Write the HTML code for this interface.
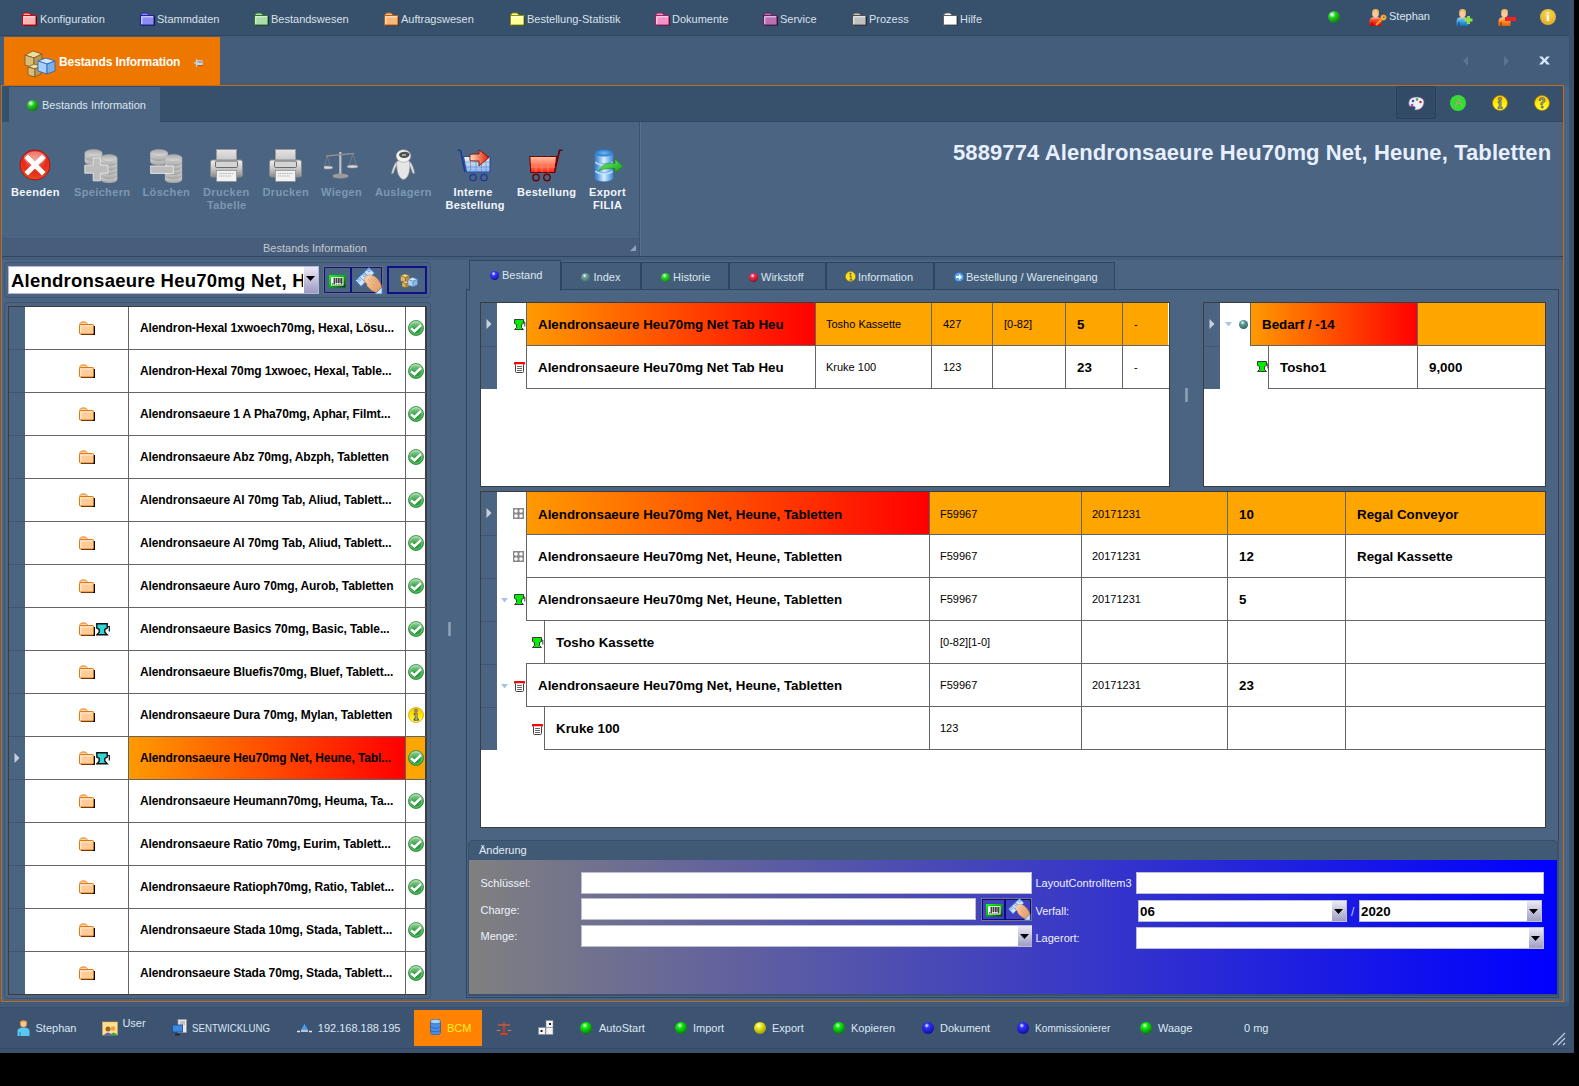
<!DOCTYPE html><html><head><meta charset="utf-8"><style>
html,body{margin:0;padding:0;background:#000;width:1579px;height:1086px;overflow:hidden}
div{position:absolute;box-sizing:border-box}
.t{white-space:pre;font-family:"Liberation Sans",sans-serif}
body{font-family:"Liberation Sans",sans-serif}
</style></head><body><div style="left:0px;top:0px;width:1574px;height:1053px;background:#4a6482"></div><div style="left:0px;top:0px;width:1569px;height:36px;background:#37506c"></div><div style="left:0px;top:35px;width:1569px;height:1px;background:#2e4661"></div><div style="left:1569px;top:0px;width:5px;height:1053px;background:#3a5270"></div><div style="left:0px;top:36px;width:1569px;height:50px;background:#445d7a"></div><div style="left:4px;top:37px;width:216px;height:49px;background:#ee7700"></div><div style="left:1px;top:85px;width:1563px;height:1px;background:#c86a10"></div><div style="left:1px;top:85px;width:1px;height:917px;background:#c86a10"></div><div style="left:1563px;top:85px;width:1px;height:917px;background:#c86a10"></div><div style="left:1px;top:1001px;width:1563px;height:1px;background:#c86a10"></div><div style="left:2px;top:86px;width:1561px;height:36px;background:#37516c"></div><div style="left:160px;top:121px;width:1403px;height:1px;background:#2f4761"></div><div style="left:9px;top:87px;width:151px;height:35px;background:#4a6482"></div><div style="left:2px;top:122px;width:1561px;height:134px;background:#4a6482"></div><div style="left:639px;top:122px;width:1px;height:134px;background:#3a5270"></div><div style="left:640px;top:122px;width:1px;height:134px;background:#587190"></div><div style="left:2px;top:256px;width:1561px;height:1px;background:#2f4762"></div><div style="left:2px;top:257px;width:1561px;height:3px;background:#445d7a"></div><div style="left:2px;top:262px;width:1561px;height:739px;background:#4a6482"></div><div style="left:0px;top:1002px;width:1569px;height:51px;background:#3a5270"></div><div style="left:0px;top:1002px;width:1569px;height:5px;background:#425a78"></div><div style="left:0px;top:1007px;width:1569px;height:1px;background:#36506b"></div><div style="left:0px;top:1008px;width:1569px;height:40px;background:#3c5472"></div><div style="left:0px;top:1048px;width:1569px;height:1px;background:#334a64"></div><svg style="position:absolute;left:22px;top:12px" width="16" height="14" viewBox="0 0 16 14"><path d="M2 4.5 h13 v9 h-13 z" fill="#000"/><path d="M1 3.5 v-1 l1.5 -1.5 h4.5 l1.5 1.5 v1 z" fill="#ffb0b0" stroke="#e00000" stroke-width="1"/><rect x="0.5" y="3.5" width="13.5" height="9.5" fill="#ffb0b0" stroke="#e00000" stroke-width="1"/><path d="M1.8 12 V4.8 H13" stroke="#fff" stroke-opacity="0.7" fill="none"/></svg><div class="t" style="left:40px;top:13.69px;font-size:11px;line-height:11px;font-weight:normal;color:#d8e0ea;">Konfiguration</div><svg style="position:absolute;left:140px;top:12px" width="16" height="14" viewBox="0 0 16 14"><path d="M2 4.5 h13 v9 h-13 z" fill="#000"/><path d="M1 3.5 v-1 l1.5 -1.5 h4.5 l1.5 1.5 v1 z" fill="#8c8cf0" stroke="#2020a0" stroke-width="1"/><rect x="0.5" y="3.5" width="13.5" height="9.5" fill="#8c8cf0" stroke="#2020a0" stroke-width="1"/><path d="M1.8 12 V4.8 H13" stroke="#fff" stroke-opacity="0.7" fill="none"/></svg><div class="t" style="left:157px;top:13.69px;font-size:11px;line-height:11px;font-weight:normal;color:#d8e0ea;">Stammdaten</div><svg style="position:absolute;left:254px;top:12px" width="16" height="14" viewBox="0 0 16 14"><path d="M2 4.5 h13 v9 h-13 z" fill="#000"/><path d="M1 3.5 v-1 l1.5 -1.5 h4.5 l1.5 1.5 v1 z" fill="#a8dca8" stroke="#307030" stroke-width="1"/><rect x="0.5" y="3.5" width="13.5" height="9.5" fill="#a8dca8" stroke="#307030" stroke-width="1"/><path d="M1.8 12 V4.8 H13" stroke="#fff" stroke-opacity="0.7" fill="none"/></svg><div class="t" style="left:271px;top:13.69px;font-size:11px;line-height:11px;font-weight:normal;color:#d8e0ea;">Bestandswesen</div><svg style="position:absolute;left:384px;top:12px" width="16" height="14" viewBox="0 0 16 14"><path d="M2 4.5 h13 v9 h-13 z" fill="#000"/><path d="M1 3.5 v-1 l1.5 -1.5 h4.5 l1.5 1.5 v1 z" fill="#f8b87a" stroke="#b06020" stroke-width="1"/><rect x="0.5" y="3.5" width="13.5" height="9.5" fill="#f8b87a" stroke="#b06020" stroke-width="1"/><path d="M1.8 12 V4.8 H13" stroke="#fff" stroke-opacity="0.7" fill="none"/></svg><div class="t" style="left:401px;top:13.69px;font-size:11px;line-height:11px;font-weight:normal;color:#d8e0ea;">Auftragswesen</div><svg style="position:absolute;left:510px;top:12px" width="16" height="14" viewBox="0 0 16 14"><path d="M2 4.5 h13 v9 h-13 z" fill="#000"/><path d="M1 3.5 v-1 l1.5 -1.5 h4.5 l1.5 1.5 v1 z" fill="#ffff9c" stroke="#909000" stroke-width="1"/><rect x="0.5" y="3.5" width="13.5" height="9.5" fill="#ffff9c" stroke="#909000" stroke-width="1"/><path d="M1.8 12 V4.8 H13" stroke="#fff" stroke-opacity="0.7" fill="none"/></svg><div class="t" style="left:527px;top:13.69px;font-size:11px;line-height:11px;font-weight:normal;color:#d8e0ea;">Bestellung-Statistik</div><svg style="position:absolute;left:655px;top:12px" width="16" height="14" viewBox="0 0 16 14"><path d="M2 4.5 h13 v9 h-13 z" fill="#000"/><path d="M1 3.5 v-1 l1.5 -1.5 h4.5 l1.5 1.5 v1 z" fill="#f590c8" stroke="#a02060" stroke-width="1"/><rect x="0.5" y="3.5" width="13.5" height="9.5" fill="#f590c8" stroke="#a02060" stroke-width="1"/><path d="M1.8 12 V4.8 H13" stroke="#fff" stroke-opacity="0.7" fill="none"/></svg><div class="t" style="left:672px;top:13.69px;font-size:11px;line-height:11px;font-weight:normal;color:#d8e0ea;">Dokumente</div><svg style="position:absolute;left:763px;top:12px" width="16" height="14" viewBox="0 0 16 14"><path d="M2 4.5 h13 v9 h-13 z" fill="#000"/><path d="M1 3.5 v-1 l1.5 -1.5 h4.5 l1.5 1.5 v1 z" fill="#b870b0" stroke="#602060" stroke-width="1"/><rect x="0.5" y="3.5" width="13.5" height="9.5" fill="#b870b0" stroke="#602060" stroke-width="1"/><path d="M1.8 12 V4.8 H13" stroke="#fff" stroke-opacity="0.7" fill="none"/></svg><div class="t" style="left:780px;top:13.69px;font-size:11px;line-height:11px;font-weight:normal;color:#d8e0ea;">Service</div><svg style="position:absolute;left:852px;top:12px" width="16" height="14" viewBox="0 0 16 14"><path d="M2 4.5 h13 v9 h-13 z" fill="#000"/><path d="M1 3.5 v-1 l1.5 -1.5 h4.5 l1.5 1.5 v1 z" fill="#c0c0c0" stroke="#505050" stroke-width="1"/><rect x="0.5" y="3.5" width="13.5" height="9.5" fill="#c0c0c0" stroke="#505050" stroke-width="1"/><path d="M1.8 12 V4.8 H13" stroke="#fff" stroke-opacity="0.7" fill="none"/></svg><div class="t" style="left:869px;top:13.69px;font-size:11px;line-height:11px;font-weight:normal;color:#d8e0ea;">Prozess</div><svg style="position:absolute;left:943px;top:12px" width="16" height="14" viewBox="0 0 16 14"><path d="M2 4.5 h13 v9 h-13 z" fill="#000"/><path d="M1 3.5 v-1 l1.5 -1.5 h4.5 l1.5 1.5 v1 z" fill="#ffffff" stroke="#606060" stroke-width="1"/><rect x="0.5" y="3.5" width="13.5" height="9.5" fill="#ffffff" stroke="#606060" stroke-width="1"/><path d="M1.8 12 V4.8 H13" stroke="#fff" stroke-opacity="0.7" fill="none"/></svg><div class="t" style="left:960px;top:13.69px;font-size:11px;line-height:11px;font-weight:normal;color:#d8e0ea;">Hilfe</div><div style="left:1328px;top:11px;width:12px;height:12px;border-radius:50%;background:radial-gradient(circle at 35% 30%, #ffffff 0, #22cc22 30%, #005500 100%)"></div><svg style="position:absolute;left:1369px;top:9px" width="14" height="17" viewBox="0 0 14 17"><defs><linearGradient id="pb1369" x1="0" y1="0" x2="0" y2="1"><stop offset="0" stop-color="#ffd0b0"/><stop offset="0.3" stop-color="#ff5030"/><stop offset="1" stop-color="#d00000"/></linearGradient></defs><circle cx="6.5" cy="5" r="3.3" fill="#ffc898"/><path d="M3 4 q0 -4 3.5 -4 q4 0 3.5 4 q-1 -2 -3.5 -2 q-2.5 0 -3.5 2z" fill="#e8c060"/><path d="M0.5 17 v-5 q0 -4 6 -4 q6 0 6 4 v5 z" fill="url(#pb1369)"/><path d="M3 17 v-4" stroke="#601000" stroke-width="0.8"/></svg><svg style="position:absolute;left:1375px;top:14px" width="12" height="12" viewBox="0 0 12 12"><path d="M1 11 L7 5" stroke="#f0a030" stroke-width="2.2"/><circle cx="8.5" cy="3.5" r="2.8" fill="#ffb040" stroke="#d08020" stroke-width="0.6"/><circle cx="8.8" cy="3.2" r="0.8" fill="#3a5270"/></svg><div class="t" style="left:1389px;top:11.39px;font-size:11px;line-height:11px;font-weight:normal;color:#dce6f0;">Stephan</div><svg style="position:absolute;left:1456px;top:9px" width="14" height="17" viewBox="0 0 14 17"><defs><linearGradient id="pb1456" x1="0" y1="0" x2="0" y2="1"><stop offset="0" stop-color="#ffd0b0"/><stop offset="0.3" stop-color="#50b8f0"/><stop offset="1" stop-color="#1070c0"/></linearGradient></defs><circle cx="6.5" cy="5" r="3.3" fill="#ffc898"/><path d="M3 4 q0 -4 3.5 -4 q4 0 3.5 4 q-1 -2 -3.5 -2 q-2.5 0 -3.5 2z" fill="#e8c060"/><path d="M0.5 17 v-5 q0 -4 6 -4 q6 0 6 4 v5 z" fill="url(#pb1456)"/><path d="M3 17 v-4" stroke="#601000" stroke-width="0.8"/></svg><svg style="position:absolute;left:1464px;top:15px" width="10" height="10" viewBox="0 0 10 10"><path d="M4.5 1 v8 M0.5 5 h8" stroke="#90e040" stroke-width="3"/></svg><svg style="position:absolute;left:1498px;top:9px" width="14" height="17" viewBox="0 0 14 17"><defs><linearGradient id="pb1498" x1="0" y1="0" x2="0" y2="1"><stop offset="0" stop-color="#ffd0b0"/><stop offset="0.3" stop-color="#ffa040"/><stop offset="1" stop-color="#e06000"/></linearGradient></defs><circle cx="6.5" cy="5" r="3.3" fill="#ffc898"/><path d="M3 4 q0 -4 3.5 -4 q4 0 3.5 4 q-1 -2 -3.5 -2 q-2.5 0 -3.5 2z" fill="#e8c060"/><path d="M0.5 17 v-5 q0 -4 6 -4 q6 0 6 4 v5 z" fill="url(#pb1498)"/><path d="M3 17 v-4" stroke="#601000" stroke-width="0.8"/></svg><svg style="position:absolute;left:1505px;top:17px" width="11" height="5" viewBox="0 0 11 5"><rect x="0" y="0" width="11" height="4" fill="#ee2222"/></svg><div style="left:1540px;top:9px;width:16px;height:16px;border-radius:50%;background:radial-gradient(circle at 50% 35%, #f8d860, #d8a010);"></div><div class="t" style="left:1540px;top:9px;width:16px;height:16px;line-height:16px;text-align:center;font-family:'Liberation Serif',serif;font-weight:bold;font-size:12px;color:#ffffff">i</div><svg style="position:absolute;left:24px;top:50px" width="34" height="28" viewBox="0 0 34 28"><g stroke="#7a5a20" stroke-width="0.8"><path d="M1 5 l8 -4 l9 3 l-8 4 z" fill="#f0dca0"/><path d="M1 5 l9 3 v10 l-9 -3 z" fill="#d8bc78"/><path d="M10 8 l8 -4 v10 l-8 4 z" fill="#b8985a"/><path d="M4 17 l6 -3 l7 2 l-6 3 z" fill="#f0dca0"/><path d="M4 17 l7 2 v8 l-7 -2 z" fill="#d8bc78"/><path d="M11 19 l6 -3 v8 l-6 3 z" fill="#b8985a"/></g><g stroke="#2a62b0" stroke-width="0.8"><path d="M14 11 l8 -3 l9 3 l-8 3 z" fill="#d0e8ff"/><path d="M14 11 l9 3 v10 l-9 -3 z" fill="#a8d0f8"/><path d="M23 14 l8 -3 v10 l-8 3 z" fill="#7ab0e8"/></g></svg><div class="t" style="left:59px;top:56.34px;font-size:12px;line-height:12px;font-weight:bold;color:#ffffff;letter-spacing:-0.1px">Bestands Information</div><svg style="position:absolute;left:194px;top:59px" width="10" height="9" viewBox="0 0 10 9"><path d="M0 3.8 h2.5 M2.6 0.3 v7.4" stroke="#c0dcf8" stroke-width="1.3"/><rect x="3" y="1.3" width="5.6" height="4.8" rx="0.6" fill="#c0dcf8"/><path d="M3.5 3 h4.5" stroke="#b05a10" stroke-width="0.9"/><path d="M3.2 6.6 h5.6" stroke="#9a5010" stroke-width="0.7"/></svg><svg style="position:absolute;left:1462px;top:56px" width="7" height="10" viewBox="0 0 7 10"><path d="M6 0 L1 5 L6 10 z" fill="#5a7492"/></svg><svg style="position:absolute;left:1503px;top:56px" width="7" height="10" viewBox="0 0 7 10"><path d="M1 0 L6 5 L1 10 z" fill="#5a7492"/></svg><svg style="position:absolute;left:1539px;top:56px" width="11" height="9" viewBox="0 0 11 9"><path d="M0 0.5 h3.4 l2.1 2.4 l2.1 -2.4 h3.4 l-3.7 3.8 l3.7 4.2 h-3.4 l-2.1 -2.4 l-2.1 2.4 h-3.4 l3.7 -4.2 z" fill="#d4e4fa"/></svg><div style="left:27px;top:100px;width:11px;height:11px;border-radius:50%;background:radial-gradient(circle at 35% 30%, #ffffff 0, #22cc22 30%, #005500 100%)"></div><div class="t" style="left:42px;top:99.69px;font-size:11px;line-height:11px;font-weight:normal;color:#dce6f0;">Bestands Information</div><div style="left:1396px;top:86px;width:40px;height:33px;background:#324a66;border:1px solid #2b405a;border-radius:2px"></div><svg style="position:absolute;left:1408px;top:96px" width="17" height="15" viewBox="0 0 17 15"><path d="M8 1 C2 1 0 5 1 9 C2 12 5 9 7 11 C8 13 5 14 8 14 C14 14 16 9 16 6 C16 3 13 1 8 1 z" fill="#f0f0f8" stroke="#606080" stroke-width="0.7"/><circle cx="5" cy="5" r="1.3" fill="#3050d0"/><circle cx="9" cy="3.5" r="1.3" fill="#40a040"/><circle cx="12.5" cy="6" r="1.3" fill="#c03030"/><circle cx="4" cy="9" r="1.3" fill="#b040c0"/></svg><div style="left:1450px;top:95px;width:16px;height:16px;border-radius:50%;background:#33dd33"></div><div class="t" style="left:1450px;top:95px;width:16px;line-height:16px;text-align:center;font-size:12px;color:#b0a070">A</div><svg style="position:absolute;left:1492px;top:95px" width="16" height="16" viewBox="0 0 16 16"><defs><linearGradient id="yc" x1="0" y1="0" x2="0" y2="1"><stop offset="0" stop-color="#ffc800"/><stop offset="0.5" stop-color="#ffee00"/><stop offset="1" stop-color="#ffff40"/></linearGradient></defs><circle cx="8" cy="8" r="7.5" fill="url(#yc)" stroke="#b07800" stroke-width="0.8"/><circle cx="8" cy="4" r="1.7" fill="#8a8a8a" stroke="#444" stroke-width="0.5"/><path d="M6 6.5 h3.2 v5.5 h1.3 v1.6 h-4.6 v-1.6 h1.2 v-4 h-1.1z" fill="#999" stroke="#444" stroke-width="0.5"/></svg><svg style="position:absolute;left:1534px;top:95px" width="16" height="16" viewBox="0 0 16 16"><circle cx="8" cy="8" r="7.5" fill="url(#yc)" stroke="#b07800" stroke-width="0.8"/><path d="M5 5.5 q0 -3 3 -3 q3.2 0 3.2 3 q0 1.8 -2 2.6 q-0.8 0.4 -0.8 1.6 h-1.8 q0 -2 1.2 -2.6 q1.4 -0.7 1.4 -1.6 q0 -1.3 -1.2 -1.3 q-1.2 0 -1.2 1.3z" fill="#999" stroke="#444" stroke-width="0.5"/><circle cx="8.2" cy="12" r="1.2" fill="#999" stroke="#444" stroke-width="0.5"/></svg><svg style="position:absolute;left:19px;top:149px" width="32" height="32" viewBox="0 0 32 32"><defs><radialGradient id="rg1" cx="50%" cy="35%" r="65%"><stop offset="0" stop-color="#f08070"/><stop offset="0.6" stop-color="#e82a1c"/><stop offset="1" stop-color="#e05020"/></radialGradient></defs><circle cx="16" cy="16" r="15" fill="url(#rg1)" stroke="#b01010" stroke-width="1"/><ellipse cx="16" cy="9" rx="11" ry="6.5" fill="#fff" fill-opacity="0.3"/><path d="M9 9 L23 23 M23 9 L9 23" stroke="#fff" stroke-width="5" stroke-linecap="square"/></svg><div class="t" style="left:11px;top:187.39px;font-size:11px;line-height:11px;font-weight:bold;color:#f2f6fc;letter-spacing:0.35px">Beenden</div><svg style="position:absolute;left:84px;top:149px" width="34" height="34" viewBox="0 0 34 34"><defs><linearGradient id="cs1" x1="0" x2="0" y1="0" y2="1"><stop offset="0" stop-color="#e0e0e0"/><stop offset="1" stop-color="#a4a4a4"/></linearGradient><linearGradient id="ct1" x1="0" x2="0" y1="0" y2="1"><stop offset="0" stop-color="#a8a8a8"/><stop offset="1" stop-color="#dadada"/></linearGradient></defs><path d="M0.8000000000000007 8.3 v4.3 a8.7 3.6 0 0 0 17.4 0 v-4.3" fill="url(#cs1)" stroke="#9a9a9a" stroke-width="0.5"/><path d="M0.8000000000000007 4.0 v4.3 a8.7 3.6 0 0 0 17.4 0 v-4.3" fill="url(#cs1)" stroke="#9a9a9a" stroke-width="0.5"/><ellipse cx="9.5" cy="4" rx="8.7" ry="3.6" fill="url(#ct1)" stroke="#a8a8a8" stroke-width="0.5"/><path d="M16.8 26.2 v4.3 a8.2 3.6 0 0 0 16.4 0 v-4.3" fill="url(#cs1)" stroke="#9a9a9a" stroke-width="0.5"/><path d="M16.8 21.9 v4.3 a8.2 3.6 0 0 0 16.4 0 v-4.3" fill="url(#cs1)" stroke="#9a9a9a" stroke-width="0.5"/><path d="M16.8 17.6 v4.3 a8.2 3.6 0 0 0 16.4 0 v-4.3" fill="url(#cs1)" stroke="#9a9a9a" stroke-width="0.5"/><path d="M16.8 13.3 v4.3 a8.2 3.6 0 0 0 16.4 0 v-4.3" fill="url(#cs1)" stroke="#9a9a9a" stroke-width="0.5"/><path d="M16.8 9.0 v4.3 a8.2 3.6 0 0 0 16.4 0 v-4.3" fill="url(#cs1)" stroke="#9a9a9a" stroke-width="0.5"/><ellipse cx="25" cy="9" rx="8.2" ry="3.6" fill="url(#ct1)" stroke="#a8a8a8" stroke-width="0.5"/><path d="M9.2 9 h7.2 v7.2 h7.6 v8 h-7.6 v7.6 h-7.2 v-7.6 h-8.4 v-8 h8.4 z" fill="#bdbdbd" stroke="#e8e8e8" stroke-width="0.9"/></svg><div class="t" style="left:74px;top:187.39px;font-size:11px;line-height:11px;font-weight:bold;color:#7f97b3;letter-spacing:0.35px">Speichern</div><svg style="position:absolute;left:150px;top:149px" width="34" height="34" viewBox="0 0 34 34"><defs><linearGradient id="cs2" x1="0" x2="0" y1="0" y2="1"><stop offset="0" stop-color="#e0e0e0"/><stop offset="1" stop-color="#a4a4a4"/></linearGradient><linearGradient id="ct2" x1="0" x2="0" y1="0" y2="1"><stop offset="0" stop-color="#a8a8a8"/><stop offset="1" stop-color="#dadada"/></linearGradient></defs><path d="M0.1999999999999993 8.3 v4.3 a8.8 3.6 0 0 0 17.6 0 v-4.3" fill="url(#cs2)" stroke="#9a9a9a" stroke-width="0.5"/><path d="M0.1999999999999993 4.0 v4.3 a8.8 3.6 0 0 0 17.6 0 v-4.3" fill="url(#cs2)" stroke="#9a9a9a" stroke-width="0.5"/><ellipse cx="9" cy="4" rx="8.8" ry="3.6" fill="url(#ct2)" stroke="#a8a8a8" stroke-width="0.5"/><path d="M15.0 26.2 v4.3 a8.5 3.6 0 0 0 17.0 0 v-4.3" fill="url(#cs2)" stroke="#9a9a9a" stroke-width="0.5"/><path d="M15.0 21.9 v4.3 a8.5 3.6 0 0 0 17.0 0 v-4.3" fill="url(#cs2)" stroke="#9a9a9a" stroke-width="0.5"/><path d="M15.0 17.6 v4.3 a8.5 3.6 0 0 0 17.0 0 v-4.3" fill="url(#cs2)" stroke="#9a9a9a" stroke-width="0.5"/><path d="M15.0 13.3 v4.3 a8.5 3.6 0 0 0 17.0 0 v-4.3" fill="url(#cs2)" stroke="#9a9a9a" stroke-width="0.5"/><path d="M15.0 9.0 v4.3 a8.5 3.6 0 0 0 17.0 0 v-4.3" fill="url(#cs2)" stroke="#9a9a9a" stroke-width="0.5"/><ellipse cx="23.5" cy="9" rx="8.5" ry="3.6" fill="url(#ct2)" stroke="#a8a8a8" stroke-width="0.5"/><rect x="0.7" y="17" width="22.6" height="7.4" fill="#bdbdbd" stroke="#e8e8e8" stroke-width="0.9"/></svg><div class="t" style="left:142.5px;top:187.39px;font-size:11px;line-height:11px;font-weight:bold;color:#7f97b3;letter-spacing:0.35px">Löschen</div><svg style="position:absolute;left:210px;top:149px" width="33" height="33" viewBox="0 0 33 33"><defs><linearGradient id="pg210" x1="0" y1="0" x2="0" y2="1"><stop offset="0" stop-color="#f0f0f0"/><stop offset="0.5" stop-color="#c8c8c8"/><stop offset="1" stop-color="#8a8a8a"/></linearGradient><linearGradient id="pt210" x1="0" y1="0" x2="0" y2="1"><stop offset="0" stop-color="#e4e4e4"/><stop offset="1" stop-color="#c4c4c4"/></linearGradient></defs><rect x="6.5" y="0.5" width="20" height="12" fill="url(#pt210)" stroke="#9a9a9a"/><rect x="0.5" y="11" width="32" height="17" rx="2" fill="url(#pg210)" stroke="#8a8a8a"/><rect x="5.5" y="12" width="22" height="6.5" rx="1.2" fill="#d4d4d4" stroke="#6a6a6a" stroke-width="1"/><rect x="6.5" y="21.5" width="20" height="11" fill="#f2f2f2" stroke="#8a8a8a" stroke-width="0.7"/><path d="M9 24.5 h15 M9 27 h12" stroke="#8a8a8a" stroke-width="0.6" stroke-dasharray="1.2 0.6"/></svg><div class="t" style="left:203px;top:187.39px;font-size:11px;line-height:11px;font-weight:bold;color:#7f97b3;letter-spacing:0.35px">Drucken</div><div class="t" style="left:207px;top:199.89px;font-size:11px;line-height:11px;font-weight:bold;color:#7f97b3;letter-spacing:0.35px">Tabelle</div><svg style="position:absolute;left:269px;top:149px" width="33" height="33" viewBox="0 0 33 33"><defs><linearGradient id="pg269" x1="0" y1="0" x2="0" y2="1"><stop offset="0" stop-color="#f0f0f0"/><stop offset="0.5" stop-color="#c8c8c8"/><stop offset="1" stop-color="#8a8a8a"/></linearGradient><linearGradient id="pt269" x1="0" y1="0" x2="0" y2="1"><stop offset="0" stop-color="#e4e4e4"/><stop offset="1" stop-color="#c4c4c4"/></linearGradient></defs><rect x="6.5" y="0.5" width="20" height="12" fill="url(#pt269)" stroke="#9a9a9a"/><rect x="0.5" y="11" width="32" height="17" rx="2" fill="url(#pg269)" stroke="#8a8a8a"/><rect x="5.5" y="12" width="22" height="6.5" rx="1.2" fill="#d4d4d4" stroke="#6a6a6a" stroke-width="1"/><rect x="6.5" y="21.5" width="20" height="11" fill="#f2f2f2" stroke="#8a8a8a" stroke-width="0.7"/><path d="M9 24.5 h15 M9 27 h12" stroke="#8a8a8a" stroke-width="0.6" stroke-dasharray="1.2 0.6"/></svg><div class="t" style="left:262.5px;top:187.39px;font-size:11px;line-height:11px;font-weight:bold;color:#7f97b3;letter-spacing:0.35px">Drucken</div><svg style="position:absolute;left:324px;top:149px" width="34" height="30" viewBox="0 0 34 30"><path d="M16.3 3 V26" stroke="#c0c0c0" stroke-width="2.2"/><path d="M2 7 L30 4.5" stroke="#8e8e8e" stroke-width="1.6"/><ellipse cx="16.5" cy="27" rx="8" ry="2.4" fill="#9a9a9a"/><path d="M3 7 L0.5 18 M3 7 L6.5 18 M29 4.5 L25 17 M29 4.5 L32.5 17" stroke="#8a8a8a" stroke-width="0.6"/><ellipse cx="3.5" cy="18.5" rx="5.5" ry="1.6" fill="#d8d8d8" stroke="#8a8a8a" stroke-width="0.6"/><ellipse cx="28.5" cy="17.5" rx="5.5" ry="1.6" fill="#d8d8d8" stroke="#8a8a8a" stroke-width="0.6"/></svg><div class="t" style="left:321px;top:187.39px;font-size:11px;line-height:11px;font-weight:bold;color:#7f97b3;letter-spacing:0.35px">Wiegen</div><svg style="position:absolute;left:391px;top:149px" width="24" height="31" viewBox="0 0 24 31"><path d="M5 13 C2.5 17 1 21 0.5 25 L2.5 24 C3.5 20 5 17 6.5 15z" fill="#dcdcdc" stroke="#9a9a9a" stroke-width="0.5"/><path d="M19.5 13 C22 17 23.5 21 23.5 25 L21.5 24 C20.5 20 19 17 17.5 15z" fill="#dcdcdc" stroke="#9a9a9a" stroke-width="0.5"/><path d="M6 12 C5 20 7 29.5 12.5 30.5 C18 29.5 19.5 20 18.5 12 z" fill="#e6e6e6" stroke="#a0a0a0" stroke-width="0.6"/><ellipse cx="12.5" cy="7" rx="7.3" ry="6.3" fill="#f2f2f2" stroke="#a0a0a0" stroke-width="0.6"/><path d="M8 5.5 C8.5 2.5 16 1.5 18.5 4.5 C19 7.5 16 9 13 9 C10 9 8 7.5 8 5.5z" fill="#505050"/><path d="M11 5 h4 v2 h-4z" fill="#a0a0a0"/></svg><div class="t" style="left:375px;top:187.39px;font-size:11px;line-height:11px;font-weight:bold;color:#7f97b3;letter-spacing:0.35px">Auslagern</div><svg style="position:absolute;left:457px;top:149px" width="34" height="33" viewBox="0 0 34 33"><defs><linearGradient id="cb" x1="0" y1="0" x2="0" y2="1"><stop offset="0" stop-color="#f0f8e8"/><stop offset="1" stop-color="#8ab4f0"/></linearGradient><linearGradient id="ar" x1="0" y1="0" x2="1" y2="0"><stop offset="0" stop-color="#ffe0c0"/><stop offset="1" stop-color="#e81800"/></linearGradient></defs><path d="M0.5 1.2 h3 L8 23" stroke="#1a3a98" stroke-width="1.5" fill="none"/><path d="M6.5 7.5 H33 V23 H9.5 Z" fill="url(#cb)" stroke="#2a4aa8" stroke-width="1.1"/><path d="M13.5 7.5 V23 M19 7.5 V23 M24.5 7.5 V23 M29 7.5 V23 M7.5 13 H33 M8.5 18 H33" stroke="#5a80d0" stroke-width="0.6"/><circle cx="16" cy="28.5" r="3.2" fill="none" stroke="#1a3a98" stroke-width="1.3"/><circle cx="27" cy="28.5" r="3.2" fill="none" stroke="#1a3a98" stroke-width="1.3"/><path d="M13 5.5 C15 5 18 5 22 5 V0.8 L32 8.5 L22 16.8 V12 C18 12 15 12 13 11.5 Z" fill="url(#ar)" stroke="#7a1000" stroke-width="0.9"/></svg><div class="t" style="left:453.5px;top:187.39px;font-size:11px;line-height:11px;font-weight:bold;color:#f2f6fc;letter-spacing:0.35px">Interne</div><div class="t" style="left:445.5px;top:199.89px;font-size:11px;line-height:11px;font-weight:bold;color:#f2f6fc;letter-spacing:0.3px">Bestellung</div><svg style="position:absolute;left:529px;top:149px" width="34" height="33" viewBox="0 0 34 33"><defs><linearGradient id="cr" x1="0" y1="0" x2="0" y2="1"><stop offset="0" stop-color="#ffc8a8"/><stop offset="1" stop-color="#ff2810"/></linearGradient></defs><path d="M33.5 1.2 h-3 L25.5 23.5" stroke="#6a0000" stroke-width="1.6" fill="none"/><path d="M0.8 7.5 H27.6 L25.5 23.5 H1.8 Z" fill="url(#cr)" stroke="#700000" stroke-width="1.1"/><path d="M7 7.5 V23.5 M13 7.5 V23.5 M19 7.5 V23.5 M1.2 12.8 H27 M1.5 18 H26.3" stroke="#ff9a80" stroke-width="0.6"/><circle cx="7" cy="28.5" r="3.2" fill="none" stroke="#6a0000" stroke-width="1.4"/><circle cx="18" cy="28.5" r="3.2" fill="none" stroke="#6a0000" stroke-width="1.4"/></svg><div class="t" style="left:517px;top:187.39px;font-size:11px;line-height:11px;font-weight:bold;color:#f2f6fc;letter-spacing:0.3px">Bestellung</div><svg style="position:absolute;left:594px;top:149px" width="30" height="33" viewBox="0 0 30 33"><defs><linearGradient id="db" x1="0" x2="1"><stop offset="0" stop-color="#2a7ad0"/><stop offset="0.5" stop-color="#d8f0ff"/><stop offset="1" stop-color="#3a88d8"/></linearGradient><radialGradient id="dt" cx="50%" cy="50%" r="60%"><stop offset="0" stop-color="#6ab8f8"/><stop offset="1" stop-color="#1a68c0"/></radialGradient><linearGradient id="ga" x1="0" y1="0" x2="1" y2="1"><stop offset="0" stop-color="#80f080"/><stop offset="1" stop-color="#10a010"/></linearGradient></defs><path d="M1 22 v7 a9 3.6 0 0 0 18 0 v-7" fill="url(#db)" stroke="#4a8ad0" stroke-width="0.5"/><ellipse cx="10" cy="22" rx="9" ry="3.6" fill="#bfe0ff"/><path d="M1 13 v7 a9 3.6 0 0 0 18 0 v-7" fill="url(#db)" stroke="#4a8ad0" stroke-width="0.5"/><ellipse cx="10" cy="13" rx="9" ry="3.6" fill="#bfe0ff"/><path d="M1 4 v7 a9 3.6 0 0 0 18 0 v-7" fill="url(#db)" stroke="#4a8ad0" stroke-width="0.5"/><ellipse cx="10" cy="4" rx="9" ry="3.6" fill="url(#dt)"/><path d="M5 22 C8 15 14 13.5 21 14.5 V10 L29 17.5 L21 23.5 V19.5 C15 19 9.5 19.5 5 22 Z" fill="url(#ga)" stroke="#0a900a" stroke-width="0.6"/></svg><div class="t" style="left:589px;top:187.39px;font-size:11px;line-height:11px;font-weight:bold;color:#f2f6fc;letter-spacing:0.35px">Export</div><div class="t" style="left:593px;top:199.89px;font-size:11px;line-height:11px;font-weight:bold;color:#f2f6fc;letter-spacing:0.35px">FILIA</div><div style="left:2px;top:239px;width:637px;height:17px;background:#465e7b"></div><div style="left:2px;top:238px;width:637px;height:1px;background:#42597a"></div><div class="t" style="left:115px;width:400px;text-align:center;top:243.19px;font-size:11px;line-height:11px;font-weight:normal;color:#c4c8cc;">Bestands Information</div><svg style="position:absolute;left:630px;top:245px" width="7" height="7" viewBox="0 0 7 7"><path d="M6 0 V6 H0 z" fill="#8aa2c0"/></svg><div class="t" style="left:953px;top:142.18px;font-size:22px;line-height:22px;font-weight:bold;color:#e8f0ff;letter-spacing:0.1px">5889774 Alendronsaeure Heu70mg Net, Heune, Tabletten</div><div style="left:4px;top:262px;width:427px;height:36px;border:1px solid #3d5571;border-radius:4px;background:#4a6482"></div><div style="left:4px;top:302px;width:427px;height:697px;border:1px solid #3d5571;border-radius:4px;background:#4a6482"></div><div style="left:8px;top:266px;width:311px;height:28px;background:#fff;border:1px solid #b8b4d8"></div><div class="t" style="left:11px;top:267px;width:292px;height:27px;overflow:hidden;font-size:18.5px;line-height:28px;font-weight:bold;color:#000;letter-spacing:0.24px">Alendronsaeure Heu70mg Net, Heune, Tabletten</div><div style="left:304px;top:267px;width:14px;height:26px;background:linear-gradient(#ecebf6,#9c9ac2)"></div><svg style="position:absolute;left:306px;top:276px" width="10" height="6" viewBox="0 0 10 6"><path d="M0 0 H9 L4.5 5 z" fill="#000"/></svg><div style="left:323px;top:266px;width:60px;height:28px;border:1px solid #6e6e6e"></div><div style="left:324px;top:267px;width:58px;height:26px;border:1.5px solid #10108a;border-right-width:1px"></div><div style="left:350px;top:267px;width:1.5px;height:26px;background:#10108a"></div><svg style="position:absolute;left:329px;top:275px" width="17" height="13" viewBox="0 0 17 13"><defs><linearGradient id="bc1" x1="0" y1="0" x2="1" y2="1"><stop offset="0" stop-color="#10ff10"/><stop offset="0.55" stop-color="#00b000"/><stop offset="1" stop-color="#003a00"/></linearGradient></defs><rect x="0" y="0" width="16.5" height="12.5" fill="url(#bc1)"/><rect x="2" y="2.2" width="12.5" height="8.3" fill="#fff"/><path d="M3.6 8.5 V9.6 M5.2 3 V9.6 M7.2 3 V8.2 M9.2 3 V8.2 M11 3 V8.2 M12.8 3 V9.6" stroke="#000" stroke-width="1.1"/><path d="M7.2 9 V9.6 M9.2 9 V9.6 M11 9 V9.6" stroke="#000" stroke-width="1"/></svg><svg style="position:absolute;left:355px;top:267px" width="28" height="27" viewBox="0 0 28 27"><defs><linearGradient id="hd1" x1="0" y1="0" x2="1" y2="1"><stop offset="0" stop-color="#ffd8b8"/><stop offset="1" stop-color="#e09050"/></linearGradient></defs><path d="M0.5 13.5 L14 0.5 L19.5 6 L6 19.5 Z" fill="#cfe8ff" stroke="#2a6ad8" stroke-width="0.9"/><path d="M4.5 9.5 L10 15 M9 5 L14.5 10.5" stroke="#2a6ad8" stroke-width="0.6"/><rect x="3" y="12" width="2.2" height="2.2" transform="rotate(45 4.1 13.1)" fill="none" stroke="#2a6ad8" stroke-width="0.6"/><rect x="8" y="7" width="2.2" height="2.2" transform="rotate(45 9.1 8.1)" fill="none" stroke="#2a6ad8" stroke-width="0.6"/><rect x="13" y="2.5" width="2.2" height="2.2" transform="rotate(45 14.1 3.6)" fill="none" stroke="#2a6ad8" stroke-width="0.6"/><path d="M9 12 C10 9 13 7.5 16 8 C19 8.5 22 11 24 14 C26 17 27 20 27 22 L22 26 C19 25 16 23 14 21 C12 19 11.5 18 12 17 C10.5 16 9 14 9 12 Z" fill="url(#hd1)" stroke="#c07840" stroke-width="0.5"/><path d="M13 12 L20 19 M15 10.5 L22 17 M17 9.5 L23.5 15.5" stroke="#c88050" stroke-width="0.5"/><path d="M20 27 L27 20 V27 Z" fill="#d8ecff" stroke="#3a7ae0" stroke-width="0.8"/></svg><div style="left:387px;top:266px;width:40px;height:28px;border:2px solid #10108a"></div><svg style="position:absolute;left:400px;top:273px" width="19" height="15" viewBox="0 0 19 15"><g stroke="#8a6020" stroke-width="0.5"><path d="M0.5 3 l4 -2 l5 1.5 l-4 2 z" fill="#f0d890"/><path d="M0.5 3 l5 1.5 v5 l-5 -1.5 z" fill="#d8b868"/><path d="M5.5 4.5 l4 -2 v5 l-4 2 z" fill="#b89040"/><path d="M2 9.5 l3.5 -1.5 l4 1 l-3.5 1.8 z" fill="#f0d890"/><path d="M2 9.5 l4 1.3 v4 l-4 -1.3 z" fill="#d8b868"/><path d="M6 10.8 l3.5 -1.8 v4 l-3.5 1.8 z" fill="#b89040"/></g><g stroke="#4a80c0" stroke-width="0.5"><path d="M8 6.5 l4.5 -2 l5 1.8 l-4.5 2 z" fill="#d8ecff"/><path d="M8 6.5 l5 1.8 v5.5 l-5 -1.8 z" fill="#b0d4f4"/><path d="M13 8.3 l4.5 -2 v5.5 l-4.5 2 z" fill="#88b8e8"/></g></svg><div style="left:8px;top:306px;width:419px;height:689px;background:#fff;border:1px solid #3c3c3c;border-right-width:2px"></div><div style="left:9px;top:307px;width:16px;height:687px;background:#4a6482"></div><svg style="position:absolute;left:79px;top:321px" width="16" height="14" viewBox="0 0 16 14"><path d="M2 5 h14 v9 h-14 z" fill="#000"/><path d="M1 4 v-1.5 l1.5 -1.5 h4 l1.5 1.5 v1.5 z" fill="#ffd8b0" stroke="#e07810" stroke-width="1"/><rect x="0.5" y="3.5" width="14" height="9.5" rx="1" fill="#ffcc99" stroke="#e07810" stroke-width="1"/><path d="M1.8 12 V5 H13.5" stroke="#fff" stroke-opacity="0.6" fill="none"/></svg><div class="t" style="left:140px;top:322.34px;font-size:12px;line-height:12px;font-weight:bold;color:#000;letter-spacing:-0.1px">Alendron-Hexal 1xwoech70mg, Hexal, Lösu...</div><svg style="position:absolute;left:408px;top:320px" width="16" height="16" viewBox="0 0 16 16"><defs><linearGradient id="ck" x1="0" y1="0" x2="0" y2="1"><stop offset="0" stop-color="#a8d8a8"/><stop offset="0.5" stop-color="#3aa84a"/><stop offset="1" stop-color="#1a9a2a"/></linearGradient></defs><circle cx="8" cy="8" r="7.5" fill="url(#ck)" stroke="#1e8a2e" stroke-width="0.8"/><circle cx="8" cy="8" r="6.2" fill="none" stroke="#fff" stroke-opacity="0.55" stroke-width="0.7"/><path d="M2.8 8.3 L6.5 11.6 L13.2 5.2" stroke="#0a5a1a" stroke-width="3.6" fill="none" stroke-opacity="0.35"/><path d="M3 8.2 L6.5 11.3 L13 5" stroke="#fff" stroke-width="2.6" fill="none"/></svg><div style="left:9px;top:349px;width:16px;height:1px;background:#3f5774"></div><div style="left:25px;top:349px;width:401px;height:1px;background:#646464"></div><svg style="position:absolute;left:79px;top:364px" width="16" height="14" viewBox="0 0 16 14"><path d="M2 5 h14 v9 h-14 z" fill="#000"/><path d="M1 4 v-1.5 l1.5 -1.5 h4 l1.5 1.5 v1.5 z" fill="#ffd8b0" stroke="#e07810" stroke-width="1"/><rect x="0.5" y="3.5" width="14" height="9.5" rx="1" fill="#ffcc99" stroke="#e07810" stroke-width="1"/><path d="M1.8 12 V5 H13.5" stroke="#fff" stroke-opacity="0.6" fill="none"/></svg><div class="t" style="left:140px;top:365.34px;font-size:12px;line-height:12px;font-weight:bold;color:#000;letter-spacing:-0.1px">Alendron-Hexal 70mg 1xwoec, Hexal, Table...</div><svg style="position:absolute;left:408px;top:363px" width="16" height="16" viewBox="0 0 16 16"><defs><linearGradient id="ck" x1="0" y1="0" x2="0" y2="1"><stop offset="0" stop-color="#a8d8a8"/><stop offset="0.5" stop-color="#3aa84a"/><stop offset="1" stop-color="#1a9a2a"/></linearGradient></defs><circle cx="8" cy="8" r="7.5" fill="url(#ck)" stroke="#1e8a2e" stroke-width="0.8"/><circle cx="8" cy="8" r="6.2" fill="none" stroke="#fff" stroke-opacity="0.55" stroke-width="0.7"/><path d="M2.8 8.3 L6.5 11.6 L13.2 5.2" stroke="#0a5a1a" stroke-width="3.6" fill="none" stroke-opacity="0.35"/><path d="M3 8.2 L6.5 11.3 L13 5" stroke="#fff" stroke-width="2.6" fill="none"/></svg><div style="left:9px;top:392px;width:16px;height:1px;background:#3f5774"></div><div style="left:25px;top:392px;width:401px;height:1px;background:#646464"></div><svg style="position:absolute;left:79px;top:407px" width="16" height="14" viewBox="0 0 16 14"><path d="M2 5 h14 v9 h-14 z" fill="#000"/><path d="M1 4 v-1.5 l1.5 -1.5 h4 l1.5 1.5 v1.5 z" fill="#ffd8b0" stroke="#e07810" stroke-width="1"/><rect x="0.5" y="3.5" width="14" height="9.5" rx="1" fill="#ffcc99" stroke="#e07810" stroke-width="1"/><path d="M1.8 12 V5 H13.5" stroke="#fff" stroke-opacity="0.6" fill="none"/></svg><div class="t" style="left:140px;top:408.34px;font-size:12px;line-height:12px;font-weight:bold;color:#000;letter-spacing:-0.1px">Alendronsaeure 1 A Pha70mg, Aphar, Filmt...</div><svg style="position:absolute;left:408px;top:406px" width="16" height="16" viewBox="0 0 16 16"><defs><linearGradient id="ck" x1="0" y1="0" x2="0" y2="1"><stop offset="0" stop-color="#a8d8a8"/><stop offset="0.5" stop-color="#3aa84a"/><stop offset="1" stop-color="#1a9a2a"/></linearGradient></defs><circle cx="8" cy="8" r="7.5" fill="url(#ck)" stroke="#1e8a2e" stroke-width="0.8"/><circle cx="8" cy="8" r="6.2" fill="none" stroke="#fff" stroke-opacity="0.55" stroke-width="0.7"/><path d="M2.8 8.3 L6.5 11.6 L13.2 5.2" stroke="#0a5a1a" stroke-width="3.6" fill="none" stroke-opacity="0.35"/><path d="M3 8.2 L6.5 11.3 L13 5" stroke="#fff" stroke-width="2.6" fill="none"/></svg><div style="left:9px;top:435px;width:16px;height:1px;background:#3f5774"></div><div style="left:25px;top:435px;width:401px;height:1px;background:#646464"></div><svg style="position:absolute;left:79px;top:450px" width="16" height="14" viewBox="0 0 16 14"><path d="M2 5 h14 v9 h-14 z" fill="#000"/><path d="M1 4 v-1.5 l1.5 -1.5 h4 l1.5 1.5 v1.5 z" fill="#ffd8b0" stroke="#e07810" stroke-width="1"/><rect x="0.5" y="3.5" width="14" height="9.5" rx="1" fill="#ffcc99" stroke="#e07810" stroke-width="1"/><path d="M1.8 12 V5 H13.5" stroke="#fff" stroke-opacity="0.6" fill="none"/></svg><div class="t" style="left:140px;top:451.34px;font-size:12px;line-height:12px;font-weight:bold;color:#000;letter-spacing:-0.1px">Alendronsaeure Abz 70mg, Abzph, Tabletten</div><svg style="position:absolute;left:408px;top:449px" width="16" height="16" viewBox="0 0 16 16"><defs><linearGradient id="ck" x1="0" y1="0" x2="0" y2="1"><stop offset="0" stop-color="#a8d8a8"/><stop offset="0.5" stop-color="#3aa84a"/><stop offset="1" stop-color="#1a9a2a"/></linearGradient></defs><circle cx="8" cy="8" r="7.5" fill="url(#ck)" stroke="#1e8a2e" stroke-width="0.8"/><circle cx="8" cy="8" r="6.2" fill="none" stroke="#fff" stroke-opacity="0.55" stroke-width="0.7"/><path d="M2.8 8.3 L6.5 11.6 L13.2 5.2" stroke="#0a5a1a" stroke-width="3.6" fill="none" stroke-opacity="0.35"/><path d="M3 8.2 L6.5 11.3 L13 5" stroke="#fff" stroke-width="2.6" fill="none"/></svg><div style="left:9px;top:478px;width:16px;height:1px;background:#3f5774"></div><div style="left:25px;top:478px;width:401px;height:1px;background:#646464"></div><svg style="position:absolute;left:79px;top:493px" width="16" height="14" viewBox="0 0 16 14"><path d="M2 5 h14 v9 h-14 z" fill="#000"/><path d="M1 4 v-1.5 l1.5 -1.5 h4 l1.5 1.5 v1.5 z" fill="#ffd8b0" stroke="#e07810" stroke-width="1"/><rect x="0.5" y="3.5" width="14" height="9.5" rx="1" fill="#ffcc99" stroke="#e07810" stroke-width="1"/><path d="M1.8 12 V5 H13.5" stroke="#fff" stroke-opacity="0.6" fill="none"/></svg><div class="t" style="left:140px;top:494.34px;font-size:12px;line-height:12px;font-weight:bold;color:#000;letter-spacing:-0.1px">Alendronsaeure Al 70mg Tab, Aliud, Tablett...</div><svg style="position:absolute;left:408px;top:492px" width="16" height="16" viewBox="0 0 16 16"><defs><linearGradient id="ck" x1="0" y1="0" x2="0" y2="1"><stop offset="0" stop-color="#a8d8a8"/><stop offset="0.5" stop-color="#3aa84a"/><stop offset="1" stop-color="#1a9a2a"/></linearGradient></defs><circle cx="8" cy="8" r="7.5" fill="url(#ck)" stroke="#1e8a2e" stroke-width="0.8"/><circle cx="8" cy="8" r="6.2" fill="none" stroke="#fff" stroke-opacity="0.55" stroke-width="0.7"/><path d="M2.8 8.3 L6.5 11.6 L13.2 5.2" stroke="#0a5a1a" stroke-width="3.6" fill="none" stroke-opacity="0.35"/><path d="M3 8.2 L6.5 11.3 L13 5" stroke="#fff" stroke-width="2.6" fill="none"/></svg><div style="left:9px;top:521px;width:16px;height:1px;background:#3f5774"></div><div style="left:25px;top:521px;width:401px;height:1px;background:#646464"></div><svg style="position:absolute;left:79px;top:536px" width="16" height="14" viewBox="0 0 16 14"><path d="M2 5 h14 v9 h-14 z" fill="#000"/><path d="M1 4 v-1.5 l1.5 -1.5 h4 l1.5 1.5 v1.5 z" fill="#ffd8b0" stroke="#e07810" stroke-width="1"/><rect x="0.5" y="3.5" width="14" height="9.5" rx="1" fill="#ffcc99" stroke="#e07810" stroke-width="1"/><path d="M1.8 12 V5 H13.5" stroke="#fff" stroke-opacity="0.6" fill="none"/></svg><div class="t" style="left:140px;top:537.34px;font-size:12px;line-height:12px;font-weight:bold;color:#000;letter-spacing:-0.1px">Alendronsaeure Al 70mg Tab, Aliud, Tablett...</div><svg style="position:absolute;left:408px;top:535px" width="16" height="16" viewBox="0 0 16 16"><defs><linearGradient id="ck" x1="0" y1="0" x2="0" y2="1"><stop offset="0" stop-color="#a8d8a8"/><stop offset="0.5" stop-color="#3aa84a"/><stop offset="1" stop-color="#1a9a2a"/></linearGradient></defs><circle cx="8" cy="8" r="7.5" fill="url(#ck)" stroke="#1e8a2e" stroke-width="0.8"/><circle cx="8" cy="8" r="6.2" fill="none" stroke="#fff" stroke-opacity="0.55" stroke-width="0.7"/><path d="M2.8 8.3 L6.5 11.6 L13.2 5.2" stroke="#0a5a1a" stroke-width="3.6" fill="none" stroke-opacity="0.35"/><path d="M3 8.2 L6.5 11.3 L13 5" stroke="#fff" stroke-width="2.6" fill="none"/></svg><div style="left:9px;top:564px;width:16px;height:1px;background:#3f5774"></div><div style="left:25px;top:564px;width:401px;height:1px;background:#646464"></div><svg style="position:absolute;left:79px;top:579px" width="16" height="14" viewBox="0 0 16 14"><path d="M2 5 h14 v9 h-14 z" fill="#000"/><path d="M1 4 v-1.5 l1.5 -1.5 h4 l1.5 1.5 v1.5 z" fill="#ffd8b0" stroke="#e07810" stroke-width="1"/><rect x="0.5" y="3.5" width="14" height="9.5" rx="1" fill="#ffcc99" stroke="#e07810" stroke-width="1"/><path d="M1.8 12 V5 H13.5" stroke="#fff" stroke-opacity="0.6" fill="none"/></svg><div class="t" style="left:140px;top:580.34px;font-size:12px;line-height:12px;font-weight:bold;color:#000;letter-spacing:-0.1px">Alendronsaeure Auro 70mg, Aurob, Tabletten</div><svg style="position:absolute;left:408px;top:578px" width="16" height="16" viewBox="0 0 16 16"><defs><linearGradient id="ck" x1="0" y1="0" x2="0" y2="1"><stop offset="0" stop-color="#a8d8a8"/><stop offset="0.5" stop-color="#3aa84a"/><stop offset="1" stop-color="#1a9a2a"/></linearGradient></defs><circle cx="8" cy="8" r="7.5" fill="url(#ck)" stroke="#1e8a2e" stroke-width="0.8"/><circle cx="8" cy="8" r="6.2" fill="none" stroke="#fff" stroke-opacity="0.55" stroke-width="0.7"/><path d="M2.8 8.3 L6.5 11.6 L13.2 5.2" stroke="#0a5a1a" stroke-width="3.6" fill="none" stroke-opacity="0.35"/><path d="M3 8.2 L6.5 11.3 L13 5" stroke="#fff" stroke-width="2.6" fill="none"/></svg><div style="left:9px;top:607px;width:16px;height:1px;background:#3f5774"></div><div style="left:25px;top:607px;width:401px;height:1px;background:#646464"></div><svg style="position:absolute;left:79px;top:622px" width="16" height="14" viewBox="0 0 16 14"><path d="M2 5 h14 v9 h-14 z" fill="#000"/><path d="M1 4 v-1.5 l1.5 -1.5 h4 l1.5 1.5 v1.5 z" fill="#ffd8b0" stroke="#e07810" stroke-width="1"/><rect x="0.5" y="3.5" width="14" height="9.5" rx="1" fill="#ffcc99" stroke="#e07810" stroke-width="1"/><path d="M1.8 12 V5 H13.5" stroke="#fff" stroke-opacity="0.6" fill="none"/></svg><svg style="position:absolute;left:96px;top:623px" width="15" height="13" viewBox="0 0 15 13"><path d="M0.8 0.8 H11.2 V5.2 L8.8 6.5 V9.2 L11.2 11.8 H0.8 L3.2 9.2 V6.5 L0.8 5.2 Z" fill="#2fd6d6" stroke="#111" stroke-width="1.4"/><path d="M11.2 3.5 H13.3 V8.5" stroke="#111" stroke-width="1.2" fill="none"/></svg><div class="t" style="left:140px;top:623.34px;font-size:12px;line-height:12px;font-weight:bold;color:#000;letter-spacing:-0.1px">Alendronsaeure Basics 70mg, Basic, Table...</div><svg style="position:absolute;left:408px;top:621px" width="16" height="16" viewBox="0 0 16 16"><defs><linearGradient id="ck" x1="0" y1="0" x2="0" y2="1"><stop offset="0" stop-color="#a8d8a8"/><stop offset="0.5" stop-color="#3aa84a"/><stop offset="1" stop-color="#1a9a2a"/></linearGradient></defs><circle cx="8" cy="8" r="7.5" fill="url(#ck)" stroke="#1e8a2e" stroke-width="0.8"/><circle cx="8" cy="8" r="6.2" fill="none" stroke="#fff" stroke-opacity="0.55" stroke-width="0.7"/><path d="M2.8 8.3 L6.5 11.6 L13.2 5.2" stroke="#0a5a1a" stroke-width="3.6" fill="none" stroke-opacity="0.35"/><path d="M3 8.2 L6.5 11.3 L13 5" stroke="#fff" stroke-width="2.6" fill="none"/></svg><div style="left:9px;top:650px;width:16px;height:1px;background:#3f5774"></div><div style="left:25px;top:650px;width:401px;height:1px;background:#646464"></div><svg style="position:absolute;left:79px;top:665px" width="16" height="14" viewBox="0 0 16 14"><path d="M2 5 h14 v9 h-14 z" fill="#000"/><path d="M1 4 v-1.5 l1.5 -1.5 h4 l1.5 1.5 v1.5 z" fill="#ffd8b0" stroke="#e07810" stroke-width="1"/><rect x="0.5" y="3.5" width="14" height="9.5" rx="1" fill="#ffcc99" stroke="#e07810" stroke-width="1"/><path d="M1.8 12 V5 H13.5" stroke="#fff" stroke-opacity="0.6" fill="none"/></svg><div class="t" style="left:140px;top:666.34px;font-size:12px;line-height:12px;font-weight:bold;color:#000;letter-spacing:-0.1px">Alendronsaeure Bluefis70mg, Bluef, Tablett...</div><svg style="position:absolute;left:408px;top:664px" width="16" height="16" viewBox="0 0 16 16"><defs><linearGradient id="ck" x1="0" y1="0" x2="0" y2="1"><stop offset="0" stop-color="#a8d8a8"/><stop offset="0.5" stop-color="#3aa84a"/><stop offset="1" stop-color="#1a9a2a"/></linearGradient></defs><circle cx="8" cy="8" r="7.5" fill="url(#ck)" stroke="#1e8a2e" stroke-width="0.8"/><circle cx="8" cy="8" r="6.2" fill="none" stroke="#fff" stroke-opacity="0.55" stroke-width="0.7"/><path d="M2.8 8.3 L6.5 11.6 L13.2 5.2" stroke="#0a5a1a" stroke-width="3.6" fill="none" stroke-opacity="0.35"/><path d="M3 8.2 L6.5 11.3 L13 5" stroke="#fff" stroke-width="2.6" fill="none"/></svg><div style="left:9px;top:693px;width:16px;height:1px;background:#3f5774"></div><div style="left:25px;top:693px;width:401px;height:1px;background:#646464"></div><svg style="position:absolute;left:79px;top:708px" width="16" height="14" viewBox="0 0 16 14"><path d="M2 5 h14 v9 h-14 z" fill="#000"/><path d="M1 4 v-1.5 l1.5 -1.5 h4 l1.5 1.5 v1.5 z" fill="#ffd8b0" stroke="#e07810" stroke-width="1"/><rect x="0.5" y="3.5" width="14" height="9.5" rx="1" fill="#ffcc99" stroke="#e07810" stroke-width="1"/><path d="M1.8 12 V5 H13.5" stroke="#fff" stroke-opacity="0.6" fill="none"/></svg><div class="t" style="left:140px;top:709.34px;font-size:12px;line-height:12px;font-weight:bold;color:#000;letter-spacing:-0.1px">Alendronsaeure Dura 70mg, Mylan, Tabletten</div><svg style="position:absolute;left:408px;top:707px" width="16" height="16" viewBox="0 0 16 16"><defs><linearGradient id="yi" x1="0" y1="0" x2="0" y2="1"><stop offset="0" stop-color="#ffc400"/><stop offset="0.6" stop-color="#ffee00"/><stop offset="1" stop-color="#ffff60"/></linearGradient><linearGradient id="yg" x1="0" y1="0" x2="1" y2="0"><stop offset="0" stop-color="#555"/><stop offset="0.5" stop-color="#c0c0c0"/><stop offset="1" stop-color="#555"/></linearGradient></defs><circle cx="8" cy="8" r="7.5" fill="url(#yi)" stroke="#c89a00" stroke-width="0.7"/><circle cx="8" cy="3.6" r="1.5" fill="#999" stroke="#444" stroke-width="0.5"/><path d="M6 6 h3.2 v5.8 h1.3 v1.6 h-4.6 v-1.6 h1.2 v-4.2 h-1.1z" fill="url(#yg)" stroke="#333" stroke-width="0.5"/></svg><div style="left:9px;top:736px;width:16px;height:1px;background:#3f5774"></div><div style="left:25px;top:736px;width:401px;height:1px;background:#646464"></div><div style="left:129px;top:737px;width:276px;height:42px;background:linear-gradient(to right,#ff9a00,#ff0000)"></div><div style="left:406px;top:737px;width:19px;height:42px;background:#ffa500"></div><svg style="position:absolute;left:14px;top:753px" width="6" height="10" viewBox="0 0 6 10"><path d="M0.5 0 L5.5 5 L0.5 10 z" fill="#c8d0dc"/></svg><svg style="position:absolute;left:79px;top:751px" width="16" height="14" viewBox="0 0 16 14"><path d="M2 5 h14 v9 h-14 z" fill="#000"/><path d="M1 4 v-1.5 l1.5 -1.5 h4 l1.5 1.5 v1.5 z" fill="#ffd8b0" stroke="#e07810" stroke-width="1"/><rect x="0.5" y="3.5" width="14" height="9.5" rx="1" fill="#ffcc99" stroke="#e07810" stroke-width="1"/><path d="M1.8 12 V5 H13.5" stroke="#fff" stroke-opacity="0.6" fill="none"/></svg><svg style="position:absolute;left:96px;top:752px" width="15" height="13" viewBox="0 0 15 13"><path d="M0.8 0.8 H11.2 V5.2 L8.8 6.5 V9.2 L11.2 11.8 H0.8 L3.2 9.2 V6.5 L0.8 5.2 Z" fill="#2fd6d6" stroke="#111" stroke-width="1.4"/><path d="M11.2 3.5 H13.3 V8.5" stroke="#111" stroke-width="1.2" fill="none"/></svg><div class="t" style="left:140px;top:752.34px;font-size:12px;line-height:12px;font-weight:bold;color:#000;letter-spacing:-0.1px">Alendronsaeure Heu70mg Net, Heune, Tabl...</div><svg style="position:absolute;left:408px;top:750px" width="16" height="16" viewBox="0 0 16 16"><defs><linearGradient id="ck" x1="0" y1="0" x2="0" y2="1"><stop offset="0" stop-color="#a8d8a8"/><stop offset="0.5" stop-color="#3aa84a"/><stop offset="1" stop-color="#1a9a2a"/></linearGradient></defs><circle cx="8" cy="8" r="7.5" fill="url(#ck)" stroke="#1e8a2e" stroke-width="0.8"/><circle cx="8" cy="8" r="6.2" fill="none" stroke="#fff" stroke-opacity="0.55" stroke-width="0.7"/><path d="M2.8 8.3 L6.5 11.6 L13.2 5.2" stroke="#0a5a1a" stroke-width="3.6" fill="none" stroke-opacity="0.35"/><path d="M3 8.2 L6.5 11.3 L13 5" stroke="#fff" stroke-width="2.6" fill="none"/></svg><div style="left:9px;top:779px;width:16px;height:1px;background:#3f5774"></div><div style="left:25px;top:779px;width:401px;height:1px;background:#646464"></div><svg style="position:absolute;left:79px;top:794px" width="16" height="14" viewBox="0 0 16 14"><path d="M2 5 h14 v9 h-14 z" fill="#000"/><path d="M1 4 v-1.5 l1.5 -1.5 h4 l1.5 1.5 v1.5 z" fill="#ffd8b0" stroke="#e07810" stroke-width="1"/><rect x="0.5" y="3.5" width="14" height="9.5" rx="1" fill="#ffcc99" stroke="#e07810" stroke-width="1"/><path d="M1.8 12 V5 H13.5" stroke="#fff" stroke-opacity="0.6" fill="none"/></svg><div class="t" style="left:140px;top:795.34px;font-size:12px;line-height:12px;font-weight:bold;color:#000;letter-spacing:-0.1px">Alendronsaeure Heumann70mg, Heuma, Ta...</div><svg style="position:absolute;left:408px;top:793px" width="16" height="16" viewBox="0 0 16 16"><defs><linearGradient id="ck" x1="0" y1="0" x2="0" y2="1"><stop offset="0" stop-color="#a8d8a8"/><stop offset="0.5" stop-color="#3aa84a"/><stop offset="1" stop-color="#1a9a2a"/></linearGradient></defs><circle cx="8" cy="8" r="7.5" fill="url(#ck)" stroke="#1e8a2e" stroke-width="0.8"/><circle cx="8" cy="8" r="6.2" fill="none" stroke="#fff" stroke-opacity="0.55" stroke-width="0.7"/><path d="M2.8 8.3 L6.5 11.6 L13.2 5.2" stroke="#0a5a1a" stroke-width="3.6" fill="none" stroke-opacity="0.35"/><path d="M3 8.2 L6.5 11.3 L13 5" stroke="#fff" stroke-width="2.6" fill="none"/></svg><div style="left:9px;top:822px;width:16px;height:1px;background:#3f5774"></div><div style="left:25px;top:822px;width:401px;height:1px;background:#646464"></div><svg style="position:absolute;left:79px;top:837px" width="16" height="14" viewBox="0 0 16 14"><path d="M2 5 h14 v9 h-14 z" fill="#000"/><path d="M1 4 v-1.5 l1.5 -1.5 h4 l1.5 1.5 v1.5 z" fill="#ffd8b0" stroke="#e07810" stroke-width="1"/><rect x="0.5" y="3.5" width="14" height="9.5" rx="1" fill="#ffcc99" stroke="#e07810" stroke-width="1"/><path d="M1.8 12 V5 H13.5" stroke="#fff" stroke-opacity="0.6" fill="none"/></svg><div class="t" style="left:140px;top:838.34px;font-size:12px;line-height:12px;font-weight:bold;color:#000;letter-spacing:-0.1px">Alendronsaeure Ratio 70mg, Eurim, Tablett...</div><svg style="position:absolute;left:408px;top:836px" width="16" height="16" viewBox="0 0 16 16"><defs><linearGradient id="ck" x1="0" y1="0" x2="0" y2="1"><stop offset="0" stop-color="#a8d8a8"/><stop offset="0.5" stop-color="#3aa84a"/><stop offset="1" stop-color="#1a9a2a"/></linearGradient></defs><circle cx="8" cy="8" r="7.5" fill="url(#ck)" stroke="#1e8a2e" stroke-width="0.8"/><circle cx="8" cy="8" r="6.2" fill="none" stroke="#fff" stroke-opacity="0.55" stroke-width="0.7"/><path d="M2.8 8.3 L6.5 11.6 L13.2 5.2" stroke="#0a5a1a" stroke-width="3.6" fill="none" stroke-opacity="0.35"/><path d="M3 8.2 L6.5 11.3 L13 5" stroke="#fff" stroke-width="2.6" fill="none"/></svg><div style="left:9px;top:865px;width:16px;height:1px;background:#3f5774"></div><div style="left:25px;top:865px;width:401px;height:1px;background:#646464"></div><svg style="position:absolute;left:79px;top:880px" width="16" height="14" viewBox="0 0 16 14"><path d="M2 5 h14 v9 h-14 z" fill="#000"/><path d="M1 4 v-1.5 l1.5 -1.5 h4 l1.5 1.5 v1.5 z" fill="#ffd8b0" stroke="#e07810" stroke-width="1"/><rect x="0.5" y="3.5" width="14" height="9.5" rx="1" fill="#ffcc99" stroke="#e07810" stroke-width="1"/><path d="M1.8 12 V5 H13.5" stroke="#fff" stroke-opacity="0.6" fill="none"/></svg><div class="t" style="left:140px;top:881.34px;font-size:12px;line-height:12px;font-weight:bold;color:#000;letter-spacing:-0.1px">Alendronsaeure Ratioph70mg, Ratio, Tablet...</div><svg style="position:absolute;left:408px;top:879px" width="16" height="16" viewBox="0 0 16 16"><defs><linearGradient id="ck" x1="0" y1="0" x2="0" y2="1"><stop offset="0" stop-color="#a8d8a8"/><stop offset="0.5" stop-color="#3aa84a"/><stop offset="1" stop-color="#1a9a2a"/></linearGradient></defs><circle cx="8" cy="8" r="7.5" fill="url(#ck)" stroke="#1e8a2e" stroke-width="0.8"/><circle cx="8" cy="8" r="6.2" fill="none" stroke="#fff" stroke-opacity="0.55" stroke-width="0.7"/><path d="M2.8 8.3 L6.5 11.6 L13.2 5.2" stroke="#0a5a1a" stroke-width="3.6" fill="none" stroke-opacity="0.35"/><path d="M3 8.2 L6.5 11.3 L13 5" stroke="#fff" stroke-width="2.6" fill="none"/></svg><div style="left:9px;top:908px;width:16px;height:1px;background:#3f5774"></div><div style="left:25px;top:908px;width:401px;height:1px;background:#646464"></div><svg style="position:absolute;left:79px;top:923px" width="16" height="14" viewBox="0 0 16 14"><path d="M2 5 h14 v9 h-14 z" fill="#000"/><path d="M1 4 v-1.5 l1.5 -1.5 h4 l1.5 1.5 v1.5 z" fill="#ffd8b0" stroke="#e07810" stroke-width="1"/><rect x="0.5" y="3.5" width="14" height="9.5" rx="1" fill="#ffcc99" stroke="#e07810" stroke-width="1"/><path d="M1.8 12 V5 H13.5" stroke="#fff" stroke-opacity="0.6" fill="none"/></svg><div class="t" style="left:140px;top:924.34px;font-size:12px;line-height:12px;font-weight:bold;color:#000;letter-spacing:-0.1px">Alendronsaeure Stada 10mg, Stada, Tablett...</div><svg style="position:absolute;left:408px;top:922px" width="16" height="16" viewBox="0 0 16 16"><defs><linearGradient id="ck" x1="0" y1="0" x2="0" y2="1"><stop offset="0" stop-color="#a8d8a8"/><stop offset="0.5" stop-color="#3aa84a"/><stop offset="1" stop-color="#1a9a2a"/></linearGradient></defs><circle cx="8" cy="8" r="7.5" fill="url(#ck)" stroke="#1e8a2e" stroke-width="0.8"/><circle cx="8" cy="8" r="6.2" fill="none" stroke="#fff" stroke-opacity="0.55" stroke-width="0.7"/><path d="M2.8 8.3 L6.5 11.6 L13.2 5.2" stroke="#0a5a1a" stroke-width="3.6" fill="none" stroke-opacity="0.35"/><path d="M3 8.2 L6.5 11.3 L13 5" stroke="#fff" stroke-width="2.6" fill="none"/></svg><div style="left:9px;top:951px;width:16px;height:1px;background:#3f5774"></div><div style="left:25px;top:951px;width:401px;height:1px;background:#646464"></div><svg style="position:absolute;left:79px;top:966px" width="16" height="14" viewBox="0 0 16 14"><path d="M2 5 h14 v9 h-14 z" fill="#000"/><path d="M1 4 v-1.5 l1.5 -1.5 h4 l1.5 1.5 v1.5 z" fill="#ffd8b0" stroke="#e07810" stroke-width="1"/><rect x="0.5" y="3.5" width="14" height="9.5" rx="1" fill="#ffcc99" stroke="#e07810" stroke-width="1"/><path d="M1.8 12 V5 H13.5" stroke="#fff" stroke-opacity="0.6" fill="none"/></svg><div class="t" style="left:140px;top:967.34px;font-size:12px;line-height:12px;font-weight:bold;color:#000;letter-spacing:-0.1px">Alendronsaeure Stada 70mg, Stada, Tablett...</div><svg style="position:absolute;left:408px;top:965px" width="16" height="16" viewBox="0 0 16 16"><defs><linearGradient id="ck" x1="0" y1="0" x2="0" y2="1"><stop offset="0" stop-color="#a8d8a8"/><stop offset="0.5" stop-color="#3aa84a"/><stop offset="1" stop-color="#1a9a2a"/></linearGradient></defs><circle cx="8" cy="8" r="7.5" fill="url(#ck)" stroke="#1e8a2e" stroke-width="0.8"/><circle cx="8" cy="8" r="6.2" fill="none" stroke="#fff" stroke-opacity="0.55" stroke-width="0.7"/><path d="M2.8 8.3 L6.5 11.6 L13.2 5.2" stroke="#0a5a1a" stroke-width="3.6" fill="none" stroke-opacity="0.35"/><path d="M3 8.2 L6.5 11.3 L13 5" stroke="#fff" stroke-width="2.6" fill="none"/></svg><div style="left:128px;top:307px;width:1px;height:687px;background:#646464"></div><div style="left:405px;top:307px;width:1px;height:687px;background:#646464"></div><svg style="position:absolute;left:448px;top:622px" width="4" height="15" viewBox="0 0 4 15"><path d="M1.5 0.5 V14.5" stroke="#d0dcec" stroke-width="2.6" stroke-dasharray="1 1"/></svg><div style="left:466px;top:289px;width:1093px;height:709px;border:1px solid #2d4661"></div><div style="left:469px;top:260px;width:92px;height:31px;background:#4a6482;border:1px solid #2d4661;border-bottom:none"></div><div style="left:561px;top:262px;width:80px;height:28px;background:#445d7a;border:1px solid #2d4661;"></div><div style="left:641px;top:262px;width:88px;height:28px;background:#445d7a;border:1px solid #2d4661;"></div><div style="left:729px;top:262px;width:97px;height:28px;background:#445d7a;border:1px solid #2d4661;"></div><div style="left:826px;top:262px;width:108px;height:28px;background:#445d7a;border:1px solid #2d4661;"></div><div style="left:934px;top:262px;width:181px;height:28px;background:#445d7a;border:1px solid #2d4661;"></div><div style="left:490px;top:271.0px;width:9px;height:9px;border-radius:50%;background:radial-gradient(circle at 40% 30%, #ffffff 0, #3a3aff 25%, #00007a 100%)"></div><div class="t" style="left:502px;top:270.19px;font-size:11px;line-height:11px;font-weight:normal;color:#dce6f0;">Bestand</div><div style="left:581px;top:272.5px;width:9px;height:9px;border-radius:50%;background:radial-gradient(circle at 40% 30%, #ffffff 0, #70a0a0 25%, #305050 100%)"></div><div class="t" style="left:593.5px;top:271.69px;font-size:11px;line-height:11px;font-weight:normal;color:#dce6f0;">Index</div><div style="left:661px;top:272.5px;width:9px;height:9px;border-radius:50%;background:radial-gradient(circle at 40% 30%, #ffffff 0, #30e030 25%, #006000 100%)"></div><div class="t" style="left:673px;top:271.69px;font-size:11px;line-height:11px;font-weight:normal;color:#dce6f0;">Historie</div><div style="left:749px;top:272.5px;width:9px;height:9px;border-radius:50%;background:radial-gradient(circle at 40% 30%, #ffffff 0, #f03050 25%, #700010 100%)"></div><div class="t" style="left:761px;top:271.69px;font-size:11px;line-height:11px;font-weight:normal;color:#dce6f0;">Wirkstoff</div><svg style="position:absolute;left:845px;top:271px" width="11" height="11" viewBox="0 0 11 11"><circle cx="5.5" cy="5.5" r="5" fill="#ffe020" stroke="#a08000" stroke-width="0.6"/><path d="M4.5 4.5 h2 v4 h1 v1 h-3 v-1 h1 v-3 h-1z" fill="#555"/><circle cx="5.5" cy="2.8" r="1" fill="#555"/></svg><div class="t" style="left:858px;top:271.69px;font-size:11px;line-height:11px;font-weight:normal;color:#dce6f0;">Information</div><svg style="position:absolute;left:954px;top:271.5px" width="10" height="10" viewBox="0 0 10 10"><circle cx="5" cy="5" r="4.6" fill="#5aa8f0" stroke="#2a6ab8" stroke-width="0.6"/><path d="M2 4 h3 v-2 l3 3 l-3 3 v-2 h-3z" fill="#fff"/></svg><div class="t" style="left:966px;top:271.69px;font-size:11px;line-height:11px;font-weight:normal;color:#dce6f0;">Bestellung / Wareneingang</div><div style="left:480px;top:302px;width:690px;height:185px;background:#fff;border:1px solid #3c3c3c"></div><div style="left:481px;top:303px;width:16px;height:86px;background:#4a6482"></div><div style="left:481px;top:346px;width:16px;height:1px;background:#3f5774"></div><svg style="position:absolute;left:486px;top:319px" width="6" height="10" viewBox="0 0 6 10"><path d="M0.5 0 L5.5 5 L0.5 10 z" fill="#c8d0dc"/></svg><div style="left:527px;top:303px;width:288px;height:42px;background:linear-gradient(to right,#ff9a00,#ff0000)"></div><div style="left:816px;top:303px;width:352px;height:42px;background:#ffa500"></div><div style="left:526px;top:345px;width:643px;height:1px;background:#646464"></div><div style="left:526px;top:388px;width:643px;height:1px;background:#646464"></div><div style="left:526px;top:303px;width:1px;height:85px;background:#646464"></div><div style="left:815px;top:303px;width:1px;height:85px;background:#646464"></div><div style="left:931px;top:303px;width:1px;height:85px;background:#646464"></div><div style="left:992px;top:303px;width:1px;height:85px;background:#646464"></div><div style="left:1065px;top:303px;width:1px;height:85px;background:#646464"></div><div style="left:1122px;top:303px;width:1px;height:85px;background:#646464"></div><svg style="position:absolute;left:514px;top:319px" width="12" height="12" viewBox="0 0 12 12"><path d="M0.5 0.5 H9.5 V4.5 L7.5 5.5 V8.5 L9.5 10.5 H0.5 L2.5 8.5 V5.5 L0.5 4.5 Z" fill="#00ee00" stroke="#3a3a3a" stroke-width="1"/><path d="M9.5 3 H10.8 V7.5" stroke="#3a3a3a" stroke-width="1" fill="none"/></svg><svg style="position:absolute;left:514px;top:362px" width="12" height="11" viewBox="0 0 12 11"><rect x="0" y="0" width="11" height="2.6" rx="0.6" fill="#ff0000"/><path d="M1.5 2.5 V9.5 Q1.5 10.5 2.5 10.5 H8.5 Q9.5 10.5 9.5 9.5 V2.5" fill="#fff" stroke="#444" stroke-width="1"/><path d="M3 4.5 h5 M3 6.5 h5 M3 8.5 h5" stroke="#555" stroke-width="0.9"/></svg><div class="t" style="left:538px;top:317.72px;font-size:13.33px;line-height:13.33px;font-weight:bold;color:#000;">Alendronsaeure Heu70mg Net Tab Heu</div><div class="t" style="left:538px;top:360.72px;font-size:13.33px;line-height:13.33px;font-weight:bold;color:#000;">Alendronsaeure Heu70mg Net Tab Heu</div><div class="t" style="left:826px;top:318.69px;font-size:11px;line-height:11px;font-weight:normal;color:#000;">Tosho Kassette</div><div class="t" style="left:943px;top:318.69px;font-size:11px;line-height:11px;font-weight:normal;color:#000;">427</div><div class="t" style="left:1004px;top:318.69px;font-size:11px;line-height:11px;font-weight:normal;color:#000;">[0-82]</div><div class="t" style="left:826px;top:361.69px;font-size:11px;line-height:11px;font-weight:normal;color:#000;">Kruke 100</div><div class="t" style="left:943px;top:361.69px;font-size:11px;line-height:11px;font-weight:normal;color:#000;">123</div><div class="t" style="left:1077px;top:317.72px;font-size:13.33px;line-height:13.33px;font-weight:bold;color:#000;">5</div><div class="t" style="left:1077px;top:360.72px;font-size:13.33px;line-height:13.33px;font-weight:bold;color:#000;">23</div><div class="t" style="left:1134px;top:318.69px;font-size:11px;line-height:11px;font-weight:normal;color:#000;">-</div><div class="t" style="left:1134px;top:361.69px;font-size:11px;line-height:11px;font-weight:normal;color:#000;">-</div><svg style="position:absolute;left:1185px;top:388px" width="4" height="14" viewBox="0 0 4 14"><path d="M1.5 0.5 V13.5" stroke="#d0dcec" stroke-width="2.6" stroke-dasharray="1 1"/></svg><div style="left:1203px;top:302px;width:343px;height:185px;background:#fff;border:1px solid #3c3c3c"></div><div style="left:1204px;top:303px;width:16px;height:86px;background:#4a6482"></div><div style="left:1204px;top:346px;width:16px;height:1px;background:#3f5774"></div><svg style="position:absolute;left:1209px;top:319px" width="6" height="10" viewBox="0 0 6 10"><path d="M0.5 0 L5.5 5 L0.5 10 z" fill="#c8d0dc"/></svg><div style="left:1251px;top:303px;width:166px;height:42px;background:linear-gradient(to right,#ff9a00,#ff0000)"></div><div style="left:1418px;top:303px;width:127px;height:42px;background:#ffa500"></div><div style="left:1250px;top:345px;width:295px;height:1px;background:#646464"></div><div style="left:1268px;top:388px;width:277px;height:1px;background:#646464"></div><div style="left:1250px;top:303px;width:1px;height:43px;background:#646464"></div><div style="left:1268px;top:346px;width:1px;height:42px;background:#646464"></div><div style="left:1417px;top:303px;width:1px;height:85px;background:#646464"></div><svg style="position:absolute;left:1225px;top:322px" width="8" height="5" viewBox="0 0 8 5"><path d="M0 0 H7 L3.5 4.5 z" fill="#a8c4e4"/></svg><div style="left:1239px;top:320px;width:9px;height:9px;border-radius:50%;background:radial-gradient(circle at 40% 30%, #ffffff 0, #60a0a0 25%, #1a4040 100%)"></div><div class="t" style="left:1262px;top:317.72px;font-size:13.33px;line-height:13.33px;font-weight:bold;color:#000;">Bedarf / -14</div><svg style="position:absolute;left:1257px;top:361px" width="12" height="12" viewBox="0 0 12 12"><path d="M0.5 0.5 H9.5 V4.5 L7.5 5.5 V8.5 L9.5 10.5 H0.5 L2.5 8.5 V5.5 L0.5 4.5 Z" fill="#00ee00" stroke="#3a3a3a" stroke-width="1"/><path d="M9.5 3 H10.8 V7.5" stroke="#3a3a3a" stroke-width="1" fill="none"/></svg><div class="t" style="left:1280px;top:360.72px;font-size:13.33px;line-height:13.33px;font-weight:bold;color:#000;">Tosho1</div><div class="t" style="left:1429px;top:360.72px;font-size:13.33px;line-height:13.33px;font-weight:bold;color:#000;">9,000</div><div style="left:480px;top:491px;width:1066px;height:337px;background:#fff;border:1px solid #3c3c3c"></div><div style="left:481px;top:492px;width:16px;height:258px;background:#4a6482"></div><div style="left:481px;top:535px;width:16px;height:1px;background:#3f5774"></div><div style="left:481px;top:578px;width:16px;height:1px;background:#3f5774"></div><div style="left:481px;top:621px;width:16px;height:1px;background:#3f5774"></div><div style="left:481px;top:664px;width:16px;height:1px;background:#3f5774"></div><div style="left:481px;top:707px;width:16px;height:1px;background:#3f5774"></div><svg style="position:absolute;left:486px;top:508px" width="6" height="10" viewBox="0 0 6 10"><path d="M0.5 0 L5.5 5 L0.5 10 z" fill="#c8d0dc"/></svg><div style="left:527px;top:492px;width:402px;height:42px;background:linear-gradient(to right,#ff9a00,#ff0000)"></div><div style="left:930px;top:492px;width:615px;height:42px;background:#ffa500"></div><div style="left:526px;top:534px;width:1019px;height:1px;background:#646464"></div><div style="left:526px;top:577px;width:1019px;height:1px;background:#646464"></div><div style="left:526px;top:620px;width:1019px;height:1px;background:#646464"></div><div style="left:526px;top:663px;width:1019px;height:1px;background:#646464"></div><div style="left:526px;top:706px;width:1019px;height:1px;background:#646464"></div><div style="left:544px;top:749px;width:1001px;height:1px;background:#646464"></div><div style="left:929px;top:492px;width:1px;height:257px;background:#646464"></div><div style="left:1081px;top:492px;width:1px;height:257px;background:#646464"></div><div style="left:1227px;top:492px;width:1px;height:257px;background:#646464"></div><div style="left:1345px;top:492px;width:1px;height:257px;background:#646464"></div><div style="left:526px;top:492px;width:1px;height:128px;background:#646464"></div><div style="left:544px;top:620px;width:1px;height:43px;background:#646464"></div><div style="left:526px;top:663px;width:1px;height:43px;background:#646464"></div><div style="left:544px;top:706px;width:1px;height:43px;background:#646464"></div><svg style="position:absolute;left:513px;top:508px" width="11" height="11" viewBox="0 0 11 11"><rect x="0" y="0" width="11" height="11" fill="#8a8a8a"/><circle cx="3" cy="3" r="1.8" fill="#fff"/><circle cx="8" cy="3" r="1.8" fill="#fff"/><circle cx="3" cy="8" r="1.8" fill="#fff"/><circle cx="8" cy="8" r="1.8" fill="#fff"/></svg><svg style="position:absolute;left:513px;top:551px" width="11" height="11" viewBox="0 0 11 11"><rect x="0" y="0" width="11" height="11" fill="#8a8a8a"/><circle cx="3" cy="3" r="1.8" fill="#fff"/><circle cx="8" cy="3" r="1.8" fill="#fff"/><circle cx="3" cy="8" r="1.8" fill="#fff"/><circle cx="8" cy="8" r="1.8" fill="#fff"/></svg><svg style="position:absolute;left:501px;top:598px" width="8" height="5" viewBox="0 0 8 5"><path d="M0 0 H7 L3.5 4.5 z" fill="#a8c4e4"/></svg><svg style="position:absolute;left:514px;top:594px" width="12" height="12" viewBox="0 0 12 12"><path d="M0.5 0.5 H9.5 V4.5 L7.5 5.5 V8.5 L9.5 10.5 H0.5 L2.5 8.5 V5.5 L0.5 4.5 Z" fill="#00ee00" stroke="#3a3a3a" stroke-width="1"/><path d="M9.5 3 H10.8 V7.5" stroke="#3a3a3a" stroke-width="1" fill="none"/></svg><svg style="position:absolute;left:532px;top:637px" width="12" height="12" viewBox="0 0 12 12"><path d="M0.5 0.5 H9.5 V4.5 L7.5 5.5 V8.5 L9.5 10.5 H0.5 L2.5 8.5 V5.5 L0.5 4.5 Z" fill="#00ee00" stroke="#3a3a3a" stroke-width="1"/><path d="M9.5 3 H10.8 V7.5" stroke="#3a3a3a" stroke-width="1" fill="none"/></svg><svg style="position:absolute;left:501px;top:684px" width="8" height="5" viewBox="0 0 8 5"><path d="M0 0 H7 L3.5 4.5 z" fill="#a8c4e4"/></svg><svg style="position:absolute;left:514px;top:681px" width="12" height="11" viewBox="0 0 12 11"><rect x="0" y="0" width="11" height="2.6" rx="0.6" fill="#ff0000"/><path d="M1.5 2.5 V9.5 Q1.5 10.5 2.5 10.5 H8.5 Q9.5 10.5 9.5 9.5 V2.5" fill="#fff" stroke="#444" stroke-width="1"/><path d="M3 4.5 h5 M3 6.5 h5 M3 8.5 h5" stroke="#555" stroke-width="0.9"/></svg><svg style="position:absolute;left:532px;top:724px" width="12" height="11" viewBox="0 0 12 11"><rect x="0" y="0" width="11" height="2.6" rx="0.6" fill="#ff0000"/><path d="M1.5 2.5 V9.5 Q1.5 10.5 2.5 10.5 H8.5 Q9.5 10.5 9.5 9.5 V2.5" fill="#fff" stroke="#444" stroke-width="1"/><path d="M3 4.5 h5 M3 6.5 h5 M3 8.5 h5" stroke="#555" stroke-width="0.9"/></svg><div class="t" style="left:538px;top:507.72px;font-size:13.33px;line-height:13.33px;font-weight:bold;color:#000;">Alendronsaeure Heu70mg Net, Heune, Tabletten</div><div class="t" style="left:940px;top:508.69px;font-size:11px;line-height:11px;font-weight:normal;color:#000;">F59967</div><div class="t" style="left:1092px;top:508.69px;font-size:11px;line-height:11px;font-weight:normal;color:#000;">20171231</div><div class="t" style="left:1239px;top:507.72px;font-size:13.33px;line-height:13.33px;font-weight:bold;color:#000;">10</div><div class="t" style="left:1357px;top:507.72px;font-size:13.33px;line-height:13.33px;font-weight:bold;color:#000;">Regal Conveyor</div><div class="t" style="left:538px;top:549.72px;font-size:13.33px;line-height:13.33px;font-weight:bold;color:#000;">Alendronsaeure Heu70mg Net, Heune, Tabletten</div><div class="t" style="left:940px;top:550.69px;font-size:11px;line-height:11px;font-weight:normal;color:#000;">F59967</div><div class="t" style="left:1092px;top:550.69px;font-size:11px;line-height:11px;font-weight:normal;color:#000;">20171231</div><div class="t" style="left:1239px;top:549.72px;font-size:13.33px;line-height:13.33px;font-weight:bold;color:#000;">12</div><div class="t" style="left:1357px;top:549.72px;font-size:13.33px;line-height:13.33px;font-weight:bold;color:#000;">Regal Kassette</div><div class="t" style="left:538px;top:592.72px;font-size:13.33px;line-height:13.33px;font-weight:bold;color:#000;">Alendronsaeure Heu70mg Net, Heune, Tabletten</div><div class="t" style="left:940px;top:593.69px;font-size:11px;line-height:11px;font-weight:normal;color:#000;">F59967</div><div class="t" style="left:1092px;top:593.69px;font-size:11px;line-height:11px;font-weight:normal;color:#000;">20171231</div><div class="t" style="left:1239px;top:592.72px;font-size:13.33px;line-height:13.33px;font-weight:bold;color:#000;">5</div><div class="t" style="left:1357px;top:592.72px;font-size:13.33px;line-height:13.33px;font-weight:bold;color:#000;"></div><div class="t" style="left:556px;top:635.72px;font-size:13.33px;line-height:13.33px;font-weight:bold;color:#000;">Tosho Kassette</div><div class="t" style="left:940px;top:636.69px;font-size:11px;line-height:11px;font-weight:normal;color:#000;">[0-82][1-0]</div><div class="t" style="left:1092px;top:636.69px;font-size:11px;line-height:11px;font-weight:normal;color:#000;"></div><div class="t" style="left:1239px;top:635.72px;font-size:13.33px;line-height:13.33px;font-weight:bold;color:#000;"></div><div class="t" style="left:1357px;top:635.72px;font-size:13.33px;line-height:13.33px;font-weight:bold;color:#000;"></div><div class="t" style="left:538px;top:678.72px;font-size:13.33px;line-height:13.33px;font-weight:bold;color:#000;">Alendronsaeure Heu70mg Net, Heune, Tabletten</div><div class="t" style="left:940px;top:679.69px;font-size:11px;line-height:11px;font-weight:normal;color:#000;">F59967</div><div class="t" style="left:1092px;top:679.69px;font-size:11px;line-height:11px;font-weight:normal;color:#000;">20171231</div><div class="t" style="left:1239px;top:678.72px;font-size:13.33px;line-height:13.33px;font-weight:bold;color:#000;">23</div><div class="t" style="left:1357px;top:678.72px;font-size:13.33px;line-height:13.33px;font-weight:bold;color:#000;"></div><div class="t" style="left:556px;top:721.72px;font-size:13.33px;line-height:13.33px;font-weight:bold;color:#000;">Kruke 100</div><div class="t" style="left:940px;top:722.69px;font-size:11px;line-height:11px;font-weight:normal;color:#000;">123</div><div class="t" style="left:1092px;top:722.69px;font-size:11px;line-height:11px;font-weight:normal;color:#000;"></div><div class="t" style="left:1239px;top:721.72px;font-size:13.33px;line-height:13.33px;font-weight:bold;color:#000;"></div><div class="t" style="left:1357px;top:721.72px;font-size:13.33px;line-height:13.33px;font-weight:bold;color:#000;"></div><div style="left:468px;top:840px;width:1090px;height:155px;border:1px solid #3a516c;border-radius:4px 4px 0 0;background:#405975"></div><div style="left:469px;top:860px;width:1088px;height:134px;background:linear-gradient(to right,#808080,#0000ff)"></div><div style="left:468px;top:994px;width:1091px;height:2px;background:#3a516d"></div><div style="left:1557px;top:841px;width:2px;height:155px;background:#3a516d"></div><div class="t" style="left:479px;top:844.69px;font-size:11px;line-height:11px;font-weight:normal;color:#e4ecf6;">Änderung</div><div class="t" style="left:480.5px;top:878.49px;font-size:11px;line-height:11px;font-weight:normal;color:#eef2fa;">Schlüssel:</div><div class="t" style="left:480.5px;top:904.89px;font-size:11px;line-height:11px;font-weight:normal;color:#eef2fa;">Charge:</div><div class="t" style="left:480.5px;top:931.39px;font-size:11px;line-height:11px;font-weight:normal;color:#eef2fa;">Menge:</div><div style="left:581px;top:872px;width:451px;height:22px;background:#fff;border:1px solid #bdbdd0"></div><div style="left:581px;top:898px;width:395px;height:22px;background:#fff;border:1px solid #bdbdd0"></div><div style="left:981px;top:898px;width:51px;height:23px;border:1px solid #777"></div><div style="left:982px;top:899px;width:49px;height:21px;border:1.5px solid #0a0a80;border-right-width:1px"></div><div style="left:1004px;top:899px;width:1.5px;height:21px;background:#0a0a80"></div><svg style="position:absolute;left:986px;top:904px" width="17" height="13" viewBox="0 0 17 13"><defs><linearGradient id="bc2" x1="0" y1="0" x2="1" y2="1"><stop offset="0" stop-color="#10ff10"/><stop offset="0.55" stop-color="#00b000"/><stop offset="1" stop-color="#003a00"/></linearGradient></defs><rect x="0" y="0" width="16.5" height="12.5" fill="url(#bc2)"/><rect x="2" y="2.2" width="12.5" height="8.3" fill="#fff"/><path d="M3.6 8.5 V9.6 M5.2 3 V9.6 M7.2 3 V8.2 M9.2 3 V8.2 M11 3 V8.2 M12.8 3 V9.6" stroke="#000" stroke-width="1.1"/><path d="M7.2 9 V9.6 M9.2 9 V9.6 M11 9 V9.6" stroke="#000" stroke-width="1"/></svg><svg style="position:absolute;left:1008px;top:898px" width="23" height="22" viewBox="0 0 28 27"><defs><linearGradient id="hd2" x1="0" y1="0" x2="1" y2="1"><stop offset="0" stop-color="#ffd8b8"/><stop offset="1" stop-color="#e09050"/></linearGradient></defs><path d="M0.5 13.5 L14 0.5 L19.5 6 L6 19.5 Z" fill="#cfe8ff" stroke="#2a6ad8" stroke-width="0.9"/><path d="M4.5 9.5 L10 15 M9 5 L14.5 10.5" stroke="#2a6ad8" stroke-width="0.6"/><rect x="3" y="12" width="2.2" height="2.2" transform="rotate(45 4.1 13.1)" fill="none" stroke="#2a6ad8" stroke-width="0.6"/><rect x="8" y="7" width="2.2" height="2.2" transform="rotate(45 9.1 8.1)" fill="none" stroke="#2a6ad8" stroke-width="0.6"/><rect x="13" y="2.5" width="2.2" height="2.2" transform="rotate(45 14.1 3.6)" fill="none" stroke="#2a6ad8" stroke-width="0.6"/><path d="M9 12 C10 9 13 7.5 16 8 C19 8.5 22 11 24 14 C26 17 27 20 27 22 L22 26 C19 25 16 23 14 21 C12 19 11.5 18 12 17 C10.5 16 9 14 9 12 Z" fill="url(#hd2)" stroke="#c07840" stroke-width="0.5"/><path d="M13 12 L20 19 M15 10.5 L22 17 M17 9.5 L23.5 15.5" stroke="#c88050" stroke-width="0.5"/><path d="M20 27 L27 20 V27 Z" fill="#d8ecff" stroke="#3a7ae0" stroke-width="0.8"/></svg><div style="left:581px;top:925px;width:451px;height:22px;background:#fff;border:1px solid #bdbdd0"></div><div style="left:1018px;top:926px;width:14px;height:20px;background:linear-gradient(#ebeaf5,#a09fc4)"></div><svg style="position:absolute;left:1020px;top:934px" width="10" height="6" viewBox="0 0 10 6"><path d="M0 0 H9 L4.5 5 z" fill="#000"/></svg><div class="t" style="left:1035.5px;top:878.49px;font-size:11px;line-height:11px;font-weight:normal;color:#eef2fa;">LayoutControlItem3</div><div class="t" style="left:1035.5px;top:906.19px;font-size:11px;line-height:11px;font-weight:normal;color:#eef2fa;">Verfall:</div><div class="t" style="left:1035.5px;top:932.99px;font-size:11px;line-height:11px;font-weight:normal;color:#eef2fa;">Lagerort:</div><div style="left:1136px;top:872px;width:408px;height:22px;background:#fff;border:1px solid #bdbdd0"></div><div style="left:1138px;top:900px;width:209px;height:22px;background:#fff;border:1px solid #bdbdd0"></div><div style="left:1332px;top:901px;width:14px;height:20px;background:linear-gradient(#ebeaf5,#a09fc4)"></div><svg style="position:absolute;left:1334px;top:909px" width="10" height="6" viewBox="0 0 10 6"><path d="M0 0 H9 L4.5 5 z" fill="#000"/></svg><div class="t" style="left:1140px;top:904.72px;font-size:13.33px;line-height:13.33px;font-weight:bold;color:#000;">06</div><div class="t" style="left:1351px;top:905.84px;font-size:12px;line-height:12px;font-weight:normal;color:#c8d0f0;">/</div><div style="left:1359px;top:900px;width:183px;height:22px;background:#fff;border:1px solid #bdbdd0"></div><div style="left:1527px;top:901px;width:14px;height:20px;background:linear-gradient(#ebeaf5,#a09fc4)"></div><svg style="position:absolute;left:1529px;top:909px" width="10" height="6" viewBox="0 0 10 6"><path d="M0 0 H9 L4.5 5 z" fill="#000"/></svg><div class="t" style="left:1361px;top:904.72px;font-size:13.33px;line-height:13.33px;font-weight:bold;color:#000;">2020</div><div style="left:1136px;top:927px;width:408px;height:22px;background:#fff;border:1px solid #bdbdd0"></div><div style="left:1529px;top:928px;width:14px;height:20px;background:linear-gradient(#ebeaf5,#a09fc4)"></div><svg style="position:absolute;left:1531px;top:936px" width="10" height="6" viewBox="0 0 10 6"><path d="M0 0 H9 L4.5 5 z" fill="#000"/></svg><svg style="position:absolute;left:17px;top:1020px" width="13" height="16" viewBox="0 0 13 16"><circle cx="6.5" cy="4" r="3.3" fill="#ffc890" stroke="#c07030" stroke-width="0.6"/><path d="M3 2.5 q3.5 -3 7 0" stroke="#e0a040" stroke-width="1.5" fill="none"/><path d="M0.5 16 v-5 q0 -3.5 6 -3.5 q6 0 6 3.5 v5 z" fill="#58c8f0"/><path d="M3 16 v-4" stroke="#1a70b0" stroke-width="0.8"/></svg><div class="t" style="left:35.5px;top:1022.89px;font-size:11px;line-height:11px;font-weight:normal;color:#dce6f2;">Stephan</div><svg style="position:absolute;left:102px;top:1020px" width="16" height="16" viewBox="0 0 16 16"><rect x="0.5" y="2" width="15" height="13" fill="#ffe090" stroke="#e0b040" stroke-width="0.6"/><circle cx="6" cy="9" r="2.5" fill="#a0602a"/><path d="M2 15 q4 -5 8 0z" fill="#5060d0"/><circle cx="11" cy="8.5" r="2.3" fill="#f0a040"/><path d="M8 15 q3.5 -5 7.5 0z" fill="#30b040"/></svg><div class="t" style="left:122.4px;top:1017.69px;font-size:11px;line-height:11px;font-weight:normal;color:#dce6f2;">User</div><svg style="position:absolute;left:172px;top:1019px" width="15" height="17" viewBox="0 0 15 17"><rect x="6" y="0.5" width="8.5" height="13" fill="#e8e8e8" stroke="#9a9a9a" stroke-width="0.8"/><path d="M8 3 h5 M8 5 h5" stroke="#888" stroke-width="0.8"/><rect x="0.5" y="6" width="10" height="7" fill="#3a8ae0" stroke="#1a4a90" stroke-width="0.8"/><path d="M3 15.5 h5" stroke="#222" stroke-width="1.6"/></svg><div class="t" style="left:191.8px;top:1022.89px;font-size:11px;line-height:11px;font-weight:normal;color:#dce6f2;transform:scaleX(0.88);transform-origin:0 0">SENTWICKLUNG</div><svg style="position:absolute;left:297px;top:1024px" width="15" height="9" viewBox="0 0 15 9"><path d="M7.5 0 L11 6 H4 z" fill="#4aa0f0"/><path d="M0 7.5 h3 M12 7.5 h3 M4 7 h7" stroke="#e8e8e8" stroke-width="1.6"/></svg><div class="t" style="left:317.8px;top:1022.89px;font-size:11px;line-height:11px;font-weight:normal;color:#dce6f2;">192.168.188.195</div><div style="left:414px;top:1010px;width:68px;height:36px;background:#ff8200"></div><svg style="position:absolute;left:430px;top:1019px" width="11" height="16" viewBox="0 0 11 16"><path d="M0.5 2.5 v11 a5 2.3 0 0 0 10 0 v-11" fill="#4a90e8" stroke="#1a50a0" stroke-width="0.6"/><ellipse cx="5.5" cy="2.5" rx="5" ry="2.2" fill="#a8d4ff" stroke="#1a50a0" stroke-width="0.6"/><path d="M0.5 7 a5 2.2 0 0 0 10 0 M0.5 10.5 a5 2.2 0 0 0 10 0" stroke="#1a50a0" stroke-width="0.6" fill="none"/></svg><div class="t" style="left:447px;top:1022.89px;font-size:11px;line-height:11px;font-weight:normal;color:#ffee22;">BCM</div><svg style="position:absolute;left:496px;top:1021px" width="16" height="15" viewBox="0 0 16 15"><path d="M8 1 v11" stroke="#d04020" stroke-width="1.6"/><path d="M2 4 h12" stroke="#e06030" stroke-width="1.2"/><path d="M0 9 q2.5 2 5 0z M11 9 q2.5 2 5 0z" fill="#f08040"/><path d="M4 13 h8" stroke="#d04020" stroke-width="2"/></svg><svg style="position:absolute;left:538px;top:1020px" width="16" height="16" viewBox="0 0 16 16"><rect x="8" y="0.5" width="7" height="7" fill="#f4f4f4" stroke="#888" stroke-width="0.6"/><rect x="0.5" y="7.5" width="7" height="7" fill="#f4f4f4" stroke="#888" stroke-width="0.6"/><rect x="8" y="7.5" width="7" height="7" fill="#f4f4f4" stroke="#888" stroke-width="0.6"/><rect x="2.5" y="10" width="2" height="2" fill="#222"/><rect x="11" y="3" width="2" height="2" fill="#222"/></svg><div style="left:580px;top:1022px;width:12px;height:12px;border-radius:50%;background:radial-gradient(circle at 40% 30%, #ffffff 0, #12f012 22%, #004800 100%)"></div><div class="t" style="left:599px;top:1022.89px;font-size:11px;line-height:11px;font-weight:normal;color:#dce6f2;">AutoStart</div><div style="left:675px;top:1022px;width:12px;height:12px;border-radius:50%;background:radial-gradient(circle at 40% 30%, #ffffff 0, #12f012 22%, #004800 100%)"></div><div class="t" style="left:693px;top:1022.89px;font-size:11px;line-height:11px;font-weight:normal;color:#dce6f2;">Import</div><div style="left:754px;top:1022px;width:12px;height:12px;border-radius:50%;background:radial-gradient(circle at 40% 30%, #ffffff 0, #f0f020 22%, #7a7a00 100%)"></div><div class="t" style="left:772px;top:1022.89px;font-size:11px;line-height:11px;font-weight:normal;color:#dce6f2;">Export</div><div style="left:833px;top:1022px;width:12px;height:12px;border-radius:50%;background:radial-gradient(circle at 40% 30%, #ffffff 0, #12f012 22%, #004800 100%)"></div><div class="t" style="left:851px;top:1022.89px;font-size:11px;line-height:11px;font-weight:normal;color:#dce6f2;">Kopieren</div><div style="left:922px;top:1022px;width:12px;height:12px;border-radius:50%;background:radial-gradient(circle at 40% 30%, #ffffff 0, #3030ff 22%, #000070 100%)"></div><div class="t" style="left:940px;top:1022.89px;font-size:11px;line-height:11px;font-weight:normal;color:#dce6f2;">Dokument</div><div style="left:1017px;top:1022px;width:12px;height:12px;border-radius:50%;background:radial-gradient(circle at 40% 30%, #ffffff 0, #3030ff 22%, #000070 100%)"></div><div class="t" style="left:1035px;top:1022.89px;font-size:11px;line-height:11px;font-weight:normal;color:#dce6f2;transform:scaleX(0.92);transform-origin:0 0">Kommissionierer</div><div style="left:1140px;top:1022px;width:12px;height:12px;border-radius:50%;background:radial-gradient(circle at 40% 30%, #ffffff 0, #12f012 22%, #004800 100%)"></div><div class="t" style="left:1158px;top:1022.89px;font-size:11px;line-height:11px;font-weight:normal;color:#dce6f2;">Waage</div><div class="t" style="left:1244px;top:1022.89px;font-size:11px;line-height:11px;font-weight:normal;color:#dce6f2;">0 mg</div><svg style="position:absolute;left:1552px;top:1032px" width="14" height="14" viewBox="0 0 14 14"><path d="M13 1 L1 13 M13 6 L6 13 M13 11 L11 13" stroke="#c0cce0" stroke-width="1.2"/></svg></body></html>
